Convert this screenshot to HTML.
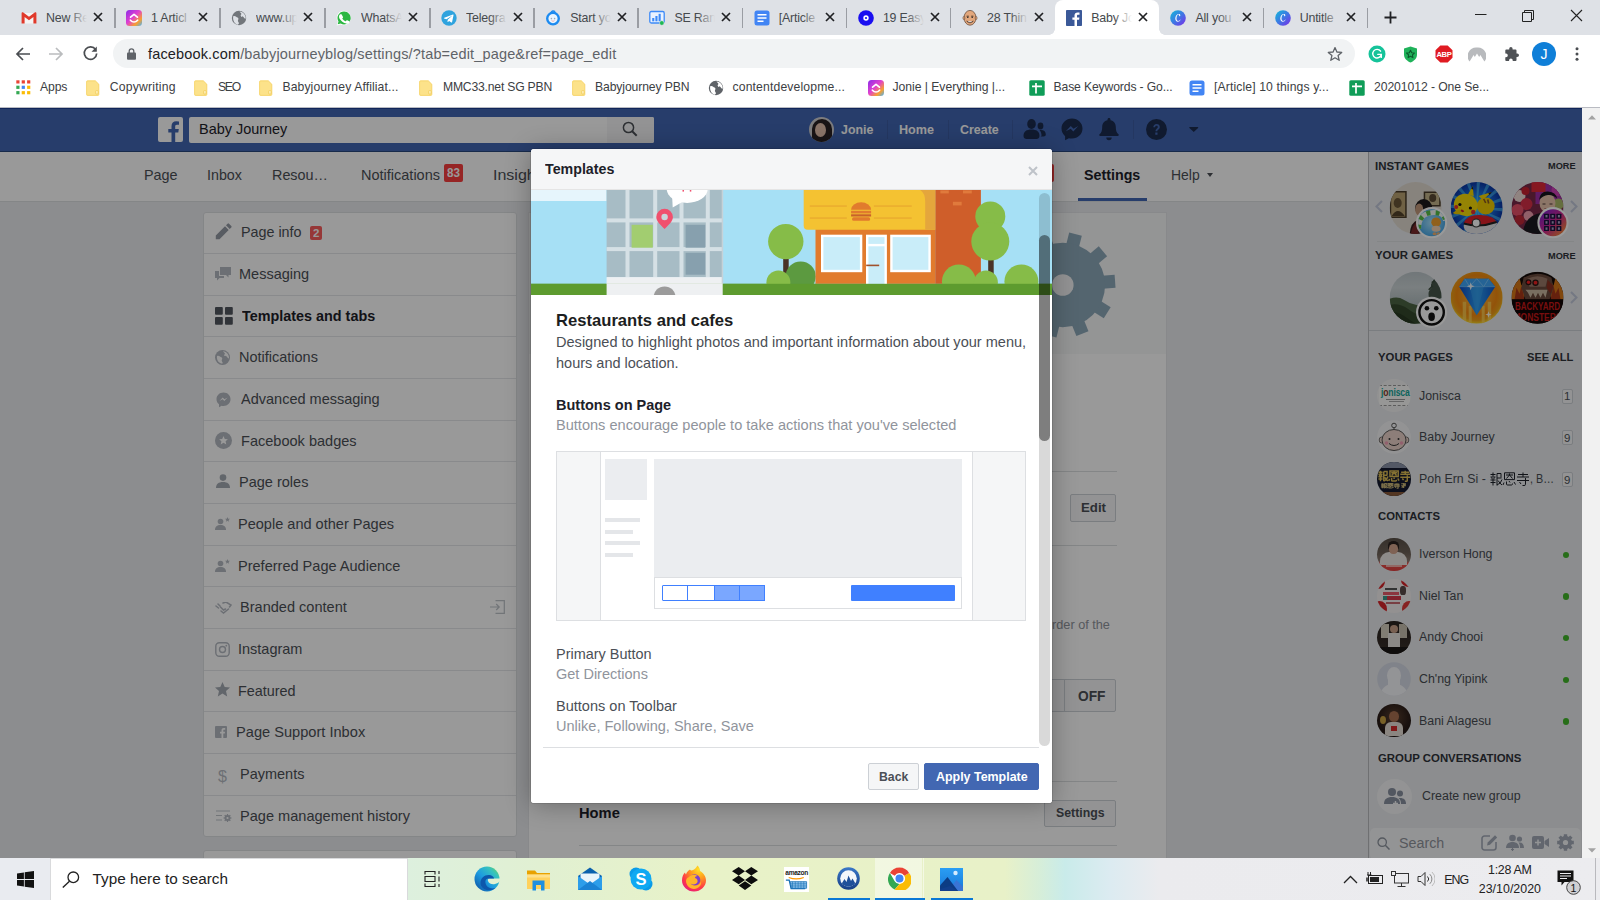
<!DOCTYPE html>
<html>
<head>
<meta charset="utf-8">
<title>Baby Journey</title>
<style>
*{box-sizing:border-box;margin:0;padding:0}
html,body{width:1600px;height:900px;overflow:hidden;background:#fff}
body{position:relative;font-family:"Liberation Sans",sans-serif;color:#1d2129;-webkit-font-smoothing:antialiased}
.abs{position:absolute}
svg{display:block}

/* ---------- Chrome tab strip ---------- */
#tabstrip{position:absolute;left:0;top:0;width:1600px;height:35px;background:#dee1e6}
.tab{position:absolute;top:0;height:35px;width:105px;font-size:12.4px;color:#45494d;letter-spacing:-0.2px}
.tab .fav{position:absolute;left:11.6px;top:9.5px;width:16px;height:16px}
.tab .tt{position:absolute;left:36.6px;top:9.5px;width:41px;height:17px;line-height:17px;overflow:hidden;white-space:nowrap}
.tab .tt:after{content:"";position:absolute;right:0;top:0;width:18px;height:17px;background:linear-gradient(90deg,rgba(222,225,230,0),#dee1e6)}
.tab .x{position:absolute;left:82.3px;top:11.3px;width:12px;height:12px}
.tab .sep{position:absolute;left:104px;top:8px;width:1.5px;height:20px;background:#9a9da3}
.tab.active{background:#fff;border-radius:8px 8px 0 0;top:0;height:35px}
.tab.active:before{content:"";position:absolute;left:-6px;bottom:0;width:6px;height:6px;background:radial-gradient(circle at 0 0,rgba(255,255,255,0) 5.5px,#fff 6px)}
.tab.active:after{content:"";position:absolute;right:-6px;bottom:0;width:6px;height:6px;background:radial-gradient(circle at 100% 0,rgba(255,255,255,0) 5.5px,#fff 6px)}
.tab.active .fav{top:9.5px}.tab.active .tt{top:9.5px}.tab.active .x{top:11.3px}
.tab.active .tt:after{background:linear-gradient(90deg,rgba(255,255,255,0),#fff)}

/* ---------- toolbar ---------- */
#toolbar{position:absolute;left:0;top:35px;width:1600px;height:37px;background:#fff}
#omni{position:absolute;left:113px;top:4px;width:1241.5px;height:29px;border-radius:15px;background:#f1f3f4}
#url{position:absolute;left:35px;top:5.7px;font-size:14.6px;line-height:19px;color:#5f6368;white-space:nowrap;letter-spacing:-0.12px}
#url b{font-weight:400;color:#202124}

/* ---------- bookmarks ---------- */
#bookmarks{position:absolute;left:0;top:72px;width:1600px;height:36px;background:#fff;border-bottom:1px solid #b9bbc2}
.bm{position:absolute;top:8px;height:16px;font-size:12.3px;line-height:16px;color:#3c4043;white-space:nowrap;letter-spacing:-0.15px}
.bm svg{position:absolute;left:0;top:0}
.bm span{position:absolute;left:24px;top:-.6px}

/* ---------- page ---------- */
#page{position:absolute;left:0;top:108px;width:1582px;height:750px;overflow:hidden;background:#e9ebee}
#overlay{position:absolute;left:0;top:0;width:1582px;height:750px;background:rgba(0,0,0,.4)}
#vscroll{position:absolute;left:1582px;top:108px;width:18px;height:750px;background:#f1f1f1}

.t{position:absolute;white-space:nowrap;line-height:20px;height:20px;transform-origin:0 50%;display:block}
/* ---------- taskbar ---------- */
#taskbar{position:absolute;left:0;top:858px;width:1600px;height:42px;background:linear-gradient(90deg,#dcefe0 0,#ddf0de 408px,#e1f0d2 540px,#e8f2c8 700px,#e8f1c8 1005px,#d6eed9 1040px,#c9ebea 1065px,#dcebf1 1110px,#ebebee 1160px,#ececef 1600px)}
</style>
</head>
<body>

<!-- ================= TAB STRIP ================= -->
<div id="tabstrip">
<div class="tab" style="left:9.5px;width:105.0px"><svg class="fav" viewBox="0 0 16 16"><path d="M1.200 3h13.600v10.500H1.200z" fill="#f4f4f4"/><path d="M.6 13.500V3.200c0-.9 1-1.300 1.700-.8L8 6.700l5.700-4.300c.7-.5 1.700-.1 1.700.8v10.300h-3V6.900L8 10.200 3.600 6.900v6.600z" fill="#e0392b"/></svg><span class="tt">New Re</span><svg class="x" viewBox="0 0 12 12"><path d="M2 2 L10 10 M10 2 L2 10" stroke="#202124" stroke-width="1.7" fill="none"/></svg><i class="sep" style="left:104.5px"></i></div>
<div class="tab" style="left:114.5px;width:105.0px"><svg class="fav" viewBox="0 0 16 16"><defs><linearGradient id="cu" x1="0" y1="0" x2="1" y2="1"><stop offset="0" stop-color="#8a2be8"/><stop offset=".45" stop-color="#e040d0"/><stop offset=".75" stop-color="#f8a030"/><stop offset="1" stop-color="#40b0ff"/></linearGradient></defs><rect x="0" y="0" width="16" height="16" rx="3.5" fill="url(#cu)"/><path d="M4.6 7.2 8 4.3l3.4 2.9" stroke="#fff" stroke-width="1.7" fill="none" stroke-linecap="round" stroke-linejoin="round"/><path d="M4.4 10.2c2.2 2.4 5 2.4 7.2 0" stroke="#fff" stroke-width="1.7" fill="none" stroke-linecap="round"/></svg><span class="tt">1 Articl</span><svg class="x" viewBox="0 0 12 12"><path d="M2 2 L10 10 M10 2 L2 10" stroke="#202124" stroke-width="1.7" fill="none"/></svg><i class="sep" style="left:104.5px"></i></div>
<div class="tab" style="left:219.5px;width:105.0px"><svg class="fav" viewBox="0 0 16 16"><circle cx="8" cy="8" r="7.2" fill="#72767b"/><path d="M2.2 6.2c1.2-.6 2.2-.2 3 .6s1.9.6 2.2 1.6-.8 1.6-.4 2.8 1.2 1.4.8 2.6l-1 .9C4 14 1.500 11 2.2 6.2zM8.500 1.600c.3 1 1.400 1 1.800 2s-1 1.300-.6 2.200 2.100.2 2.800 1.200.9 1.500 2.200 1.700c.300-3.400-2.200-6.600-6.200-7.100z" fill="#dee1e6"/></svg><span class="tt">www.up</span><svg class="x" viewBox="0 0 12 12"><path d="M2 2 L10 10 M10 2 L2 10" stroke="#202124" stroke-width="1.7" fill="none"/></svg><i class="sep" style="left:104.5px"></i></div>
<div class="tab" style="left:324.5px;width:105.0px"><svg class="fav" viewBox="0 0 16 16"><path d="M8 .7a7.200 7.200 0 0 0-6.200 10.900L.7 15.400l3.900-1A7.200 7.200 0 1 0 8 .7z" fill="#fff"/><path d="M8 1.500a6.500 6.500 0 0 0-5.500 9.900l-.8 2.900 3-.8A6.500 6.500 0 1 0 8 1.500z" fill="#2cb742"/><path d="M5.700 4.600c-.2-.4-.4-.4-.6-.4h-.5c-.2 0-.5.100-.7.400-.3.300-.9.900-.9 2.100s.9 2.400 1 2.600c.2.200 1.800 2.800 4.400 3.800 2.100.8 2.600.7 3 .6.500 0 1.500-.6 1.700-1.200s.2-1.100.2-1.200l-.5-.3-1.600-.8c-.2-.1-.4-.1-.6.100l-.7.900c-.1.200-.3.200-.5.100a6 6 0 0 1-3-2.600c-.2-.4.200-.4.600-1.200.1-.2 0-.3 0-.4z" fill="#fff"/></svg><span class="tt">WhatsA</span><svg class="x" viewBox="0 0 12 12"><path d="M2 2 L10 10 M10 2 L2 10" stroke="#202124" stroke-width="1.7" fill="none"/></svg><i class="sep" style="left:104.5px"></i></div>
<div class="tab" style="left:429.5px;width:104.2px"><svg class="fav" viewBox="0 0 16 16"><circle cx="8" cy="8" r="7.700" fill="#2fa3de"/><path d="M3.300 7.800l8.600-3.400c.4-.1.800.1.600.8l-1.400 6.900c-.1.500-.4.600-.8.400L8.100 10.900l-1.100 1c-.1.200-.2.200-.5.200l.2-2.300 4.200-3.800c.2-.2 0-.3-.3-.1L5.400 9.200 3.200 8.500c-.5-.2-.5-.5.100-.7z" fill="#fff"/></svg><span class="tt">Telegra</span><svg class="x" viewBox="0 0 12 12"><path d="M2 2 L10 10 M10 2 L2 10" stroke="#202124" stroke-width="1.7" fill="none"/></svg><i class="sep" style="left:103.7px"></i></div>
<div class="tab" style="left:533.7px;width:104.2px"><svg class="fav" viewBox="0 0 16 16"><circle cx="8" cy="8.600" r="5.800" fill="#e8f4ff" stroke="#1d8bf0" stroke-width="2.400"/><path d="M6.200 2.600c.6-1.800 2.400-2 3.300-1.200" stroke="#1d8bf0" stroke-width="1.600" fill="none" stroke-linecap="round"/><circle cx="6.400" cy="8.600" r=".8" fill="#9ab"/><circle cx="9.600" cy="8.600" r=".8" fill="#9ab"/><path d="M6.600 10.600c.9.800 1.900.8 2.800 0" stroke="#e99" stroke-width=".8" fill="none"/></svg><span class="tt">Start yo</span><svg class="x" viewBox="0 0 12 12"><path d="M2 2 L10 10 M10 2 L2 10" stroke="#202124" stroke-width="1.7" fill="none"/></svg><i class="sep" style="left:103.7px"></i></div>
<div class="tab" style="left:637.9px;width:104.2px"><svg class="fav" viewBox="0 0 16 16"><rect x=".8" y="1.500" width="14.400" height="11.500" rx="1.500" fill="#e9f2ff" stroke="#3d8af7" stroke-width="1.300"/><rect x="3.200" y="8" width="2.100" height="3.300" fill="#3d8af7"/><rect x="6.400" y="6" width="2.100" height="5.300" fill="#3d8af7"/><rect x="9.600" y="3.800" width="2.100" height="7.500" fill="#3d8af7"/><circle cx="12.800" cy="13" r="2.300" fill="#1db954" stroke="#dee1e6" stroke-width=".6"/></svg><span class="tt">SE Rank</span><svg class="x" viewBox="0 0 12 12"><path d="M2 2 L10 10 M10 2 L2 10" stroke="#202124" stroke-width="1.7" fill="none"/></svg><i class="sep" style="left:103.7px"></i></div>
<div class="tab" style="left:742.1px;width:104.2px"><svg class="fav" viewBox="0 0 16 16"><rect x=".5" y=".5" width="15" height="15" rx="2.500" fill="#4285f4"/><path d="M3.500 4.800h9M3.500 8h9M3.500 11.200h6" stroke="#fff" stroke-width="1.600"/></svg><span class="tt">[Article</span><svg class="x" viewBox="0 0 12 12"><path d="M2 2 L10 10 M10 2 L2 10" stroke="#202124" stroke-width="1.7" fill="none"/></svg><i class="sep" style="left:103.7px"></i></div>
<div class="tab" style="left:846.3px;width:104.2px"><svg class="fav" viewBox="0 0 16 16"><circle cx="8" cy="8" r="7.800" fill="#1a0ff0"/><circle cx="8" cy="8" r="2.700" fill="#fff"/><circle cx="8" cy="8" r="1.100" fill="#1a0ff0"/></svg><span class="tt">19 Easy</span><svg class="x" viewBox="0 0 12 12"><path d="M2 2 L10 10 M10 2 L2 10" stroke="#202124" stroke-width="1.7" fill="none"/></svg><i class="sep" style="left:103.7px"></i></div>
<div class="tab" style="left:950.5px;width:104.2px"><svg class="fav" viewBox="0 0 16 16"><ellipse cx="8" cy="7.800" rx="6" ry="7.400" fill="#e2a77c" stroke="#5a4030" stroke-width=".7"/><ellipse cx="1.900" cy="8" rx="1" ry="1.600" fill="#e2a77c" stroke="#5a4030" stroke-width=".5"/><ellipse cx="14.100" cy="8" rx="1" ry="1.600" fill="#e2a77c" stroke="#5a4030" stroke-width=".5"/><path d="M4.600 6.200h2.200M9.200 6.200h2.200" stroke="#3a2a20" stroke-width=".9"/><circle cx="5.800" cy="7.400" r=".7" fill="#222"/><circle cx="10.200" cy="7.400" r=".7" fill="#222"/><path d="M4.200 10.500c1.200 3.500 6.400 3.500 7.600 0-1.400 1-6.200 1-7.600 0z" fill="#6b5040"/><path d="M6.300 11.600h3.400" stroke="#fff" stroke-width=".8"/></svg><span class="tt">28 Thin</span><svg class="x" viewBox="0 0 12 12"><path d="M2 2 L10 10 M10 2 L2 10" stroke="#202124" stroke-width="1.7" fill="none"/></svg></div>
<div class="tab active" style="left:1054.7px;width:104.2px"><svg class="fav" viewBox="0 0 16 16"><rect width="16" height="16" rx=".8" fill="#3b5998"/><path d="M11 16V9.800h2.100l.3-2.400H11V5.900c0-.7.200-1.200 1.200-1.200h1.300V2.500a17 17 0 0 0-1.900-.1c-1.900 0-3.100 1.100-3.100 3.200v1.800H6.400v2.400h2.100V16z" fill="#fff"/></svg><span class="tt">Baby Jo</span><svg class="x" viewBox="0 0 12 12"><path d="M2 2 L10 10 M10 2 L2 10" stroke="#202124" stroke-width="1.7" fill="none"/></svg></div>
<div class="tab" style="left:1158.9px;width:104.2px"><svg class="fav" viewBox="0 0 16 16"><defs><linearGradient id="cv11" x1="0" y1="0" x2="1" y2="1"><stop offset="0" stop-color="#10bcd8"/><stop offset=".5" stop-color="#3e78e4"/><stop offset="1" stop-color="#7d2ae8"/></linearGradient></defs><circle cx="8" cy="8" r="7.800" fill="url(#cv11)"/><path d="M10.600 9.800c-.6 1.200-1.600 2-2.800 2-1.500 0-2.500-1.300-2.500-3.200 0-2.700 1.700-4.600 3.500-4.600.9 0 1.500.5 1.500 1.200 0 .6-.4 1-.8 1-.3 0-.5-.2-.4-.6.100-.5 0-1-.5-1-1 0-2.100 1.700-2.100 3.800 0 1.500.6 2.500 1.700 2.500.9 0 1.700-.6 2.200-1.400z" fill="#fff"/></svg><span class="tt">All you</span><svg class="x" viewBox="0 0 12 12"><path d="M2 2 L10 10 M10 2 L2 10" stroke="#202124" stroke-width="1.7" fill="none"/></svg><i class="sep" style="left:103.7px"></i></div>
<div class="tab" style="left:1263.1px;width:104.2px"><svg class="fav" viewBox="0 0 16 16"><defs><linearGradient id="cv12" x1="0" y1="0" x2="1" y2="1"><stop offset="0" stop-color="#10bcd8"/><stop offset=".5" stop-color="#3e78e4"/><stop offset="1" stop-color="#7d2ae8"/></linearGradient></defs><circle cx="8" cy="8" r="7.800" fill="url(#cv12)"/><path d="M10.600 9.800c-.6 1.200-1.600 2-2.800 2-1.500 0-2.500-1.300-2.500-3.200 0-2.700 1.700-4.600 3.500-4.600.9 0 1.500.5 1.500 1.200 0 .6-.4 1-.8 1-.3 0-.5-.2-.4-.6.100-.5 0-1-.5-1-1 0-2.100 1.700-2.100 3.800 0 1.500.6 2.500 1.700 2.500.9 0 1.700-.6 2.200-1.400z" fill="#fff"/></svg><span class="tt">Untitle</span><svg class="x" viewBox="0 0 12 12"><path d="M2 2 L10 10 M10 2 L2 10" stroke="#202124" stroke-width="1.7" fill="none"/></svg><i class="sep" style="left:103.7px"></i></div>
<svg class="abs" style="left:1384px;top:11px" width="13" height="13" viewBox="0 0 13 13"><path d="M6.500 .5v12M.5 6.500h12" stroke="#202124" stroke-width="1.800"/></svg>
<svg class="abs" style="left:1475px;top:9px" width="110" height="13" viewBox="0 0 110 13"><path d="M0 5.500h11.500" stroke="#222" stroke-width="1"/><path d="M47.500 3.500h9v9h-9zM49.500 3.500v-2h9v9h-2" stroke="#222" stroke-width="1" fill="none"/><path d="M96 1l11 11M107 1l-11 11" stroke="#222" stroke-width="1.100"/></svg>
</div>

<!-- ================= TOOLBAR ================= -->
<div id="toolbar">
<svg class="abs" style="left:15px;top:11px" width="16" height="16" viewBox="0 0 16 16"><path d="M15 8H2.500M8 2 2 8l6 6" stroke="#4a4d51" stroke-width="1.700" fill="none"/></svg>
<svg class="abs" style="left:48px;top:11px" width="16" height="16" viewBox="0 0 16 16"><path d="M1 8h12.500M8 2l6 6-6 6" stroke="#babcbe" stroke-width="1.700" fill="none"/></svg>
<svg class="abs" style="left:82px;top:10px" width="17" height="17" viewBox="0 0 17 17"><path d="M13.600 4.600A6.200 6.200 0 1 0 14.700 8.500" stroke="#4a4d51" stroke-width="1.700" fill="none"/><path d="M14.800 1.500v5.300H9.500z" fill="#4a4d51"/></svg>
<div id="omni">
<svg class="abs" style="left:14px;top:9px" width="9" height="12" viewBox="0 0 9 12"><rect x="0" y="4.500" width="9" height="7.300" rx="1" fill="#5f6368"/><path d="M2.200 5V3.200a2.300 2.300 0 0 1 4.600 0V5" stroke="#5f6368" stroke-width="1.300" fill="none"/></svg>
<div id="url" style="font-size:14.5px;letter-spacing:0.158px"><b>facebook.com</b>/babyjourneyblog/settings/?tab=edit_page&amp;ref=page_edit</div>
<svg class="abs" style="left:1214px;top:7px" width="16" height="16" viewBox="0 0 16 16"><path d="M8 1.600l1.900 4.400 4.800.4-3.600 3.200 1.100 4.700L8 11.800l-4.200 2.500 1.100-4.700L1.300 6.400l4.800-.4z" stroke="#5f6368" stroke-width="1.300" fill="none" stroke-linejoin="round"/></svg>
</div>
<svg class="abs" style="left:1368px;top:10px" width="18" height="18" viewBox="0 0 18 18"><circle cx="9" cy="9" r="8.500" fill="#15c39a"/><path d="M12.600 6.200A4.300 4.300 0 1 0 13.300 9.400H9.800M13.300 9.400v3" stroke="#fff" stroke-width="1.400" fill="none" stroke-linecap="round"/></svg>
<svg class="abs" style="left:1403px;top:11px" width="15" height="17" viewBox="0 0 15 17"><path d="M7.500 .5 14 2.500v6c0 4-3 6.500-6.500 8C4 15 1 12.500 1 8.500v-6z" fill="#1fb25a"/><path d="M7.500 4.200l1.200 2.500 2.700.3-2 1.900.5 2.700-2.400-1.300-2.400 1.300.5-2.700-2-1.900 2.700-.3z" stroke="#0b5a2c" stroke-width="1.100" fill="none" stroke-linejoin="round"/></svg>
<svg class="abs" style="left:1435px;top:10px" width="18" height="18" viewBox="0 0 18 18"><path d="M5.300 .5h7.400l4.800 4.800v7.400l-4.800 4.800H5.300L.5 12.700V5.300z" fill="#e01b22"/><text x="9" y="12" font-family="Liberation Sans" font-weight="700" font-size="7.600" fill="#fff" text-anchor="middle" letter-spacing="-.3">ABP</text></svg>
<svg class="abs" style="left:1468px;top:12px" width="18" height="15" viewBox="0 0 18 15"><path d="M1.600 14.500A8.600 8.600 0 0 1 9 .5a8.600 8.600 0 0 1 7.400 14l-4-6.500-1.200 2L9 6.500l-2.200 3.500-1.200-2z" fill="#b8babd"/></svg>
<svg class="abs" style="left:1503px;top:11px" width="16" height="16" viewBox="0 0 16 16"><path d="M6.200 2.800a1.700 1.700 0 0 1 3.400 0V3.600h3a.9.900 0 0 1 .9.900v2.900h.7a1.800 1.800 0 0 1 0 3.600h-.7v3.100a.9.900 0 0 1-.9.900H9.700v-.8a1.800 1.800 0 0 0-3.600 0v.8H3.200a.9.900 0 0 1-.9-.9v-2.900H3a1.800 1.800 0 0 0 0-3.600h-.7V4.500a.9.900 0 0 1 .9-.9h3z" fill="#4f5256"/></svg>
<div class="abs" style="left:1532px;top:7px;width:24px;height:24px;border-radius:12px;background:#0f7fd8;color:#fff;font-size:14px;line-height:24px;text-align:center">J</div>
<svg class="abs" style="left:1575px;top:12px" width="4" height="14" viewBox="0 0 4 14"><circle cx="2" cy="1.700" r="1.500" fill="#4a4d51"/><circle cx="2" cy="7" r="1.500" fill="#4a4d51"/><circle cx="2" cy="12.300" r="1.500" fill="#4a4d51"/></svg>
</div>

<!-- ================= BOOKMARKS ================= -->
<div id="bookmarks">
<div class="bm" style="left:16.0px"><svg width="15" height="15" viewBox="0 0 15 15"><rect x="0.3" y="0.3" width="3.200" height="3.200" fill="#ea4335"/><rect x="5.7" y="0.3" width="3.200" height="3.200" fill="#ea4335"/><rect x="11.1" y="0.3" width="3.200" height="3.200" fill="#ea4335"/><rect x="0.3" y="5.7" width="3.200" height="3.200" fill="#34a853"/><rect x="5.7" y="5.7" width="3.200" height="3.200" fill="#4285f4"/><rect x="11.1" y="5.7" width="3.200" height="3.200" fill="#fbbc05"/><rect x="0.3" y="11.1" width="3.200" height="3.200" fill="#34a853"/><rect x="5.7" y="11.1" width="3.200" height="3.200" fill="#fbbc05"/><rect x="11.1" y="11.1" width="3.200" height="3.200" fill="#fbbc05"/></svg><span style="left:24.0px;letter-spacing:-0.120px;font-size:12.2px">Apps</span></div>
<div class="bm" style="left:86.0px"><svg width="14" height="16" viewBox="0 0 14 16"><path d="M1.500 .8h7.800l3.500 3.400v10.300a.9.900 0 0 1-.9.900H1.500a.9.900 0 0 1-.9-.9V1.700a.9.900 0 0 1 .9-.9z" fill="#fce28a" stroke="#f5cf5a" stroke-width=".8"/><rect x="9.600" y="10.600" width="2.600" height="3.400" rx=".8" fill="#fdeeb5" stroke="#eec54c" stroke-width=".6"/></svg><span style="left:23.7px;letter-spacing:0.212px;font-size:12.2px">Copywriting</span></div>
<div class="bm" style="left:194.4px"><svg width="14" height="16" viewBox="0 0 14 16"><path d="M1.500 .8h7.800l3.500 3.400v10.300a.9.900 0 0 1-.9.900H1.500a.9.900 0 0 1-.9-.9V1.700a.9.900 0 0 1 .9-.9z" fill="#fce28a" stroke="#f5cf5a" stroke-width=".8"/><rect x="9.600" y="10.600" width="2.600" height="3.400" rx=".8" fill="#fdeeb5" stroke="#eec54c" stroke-width=".6"/></svg><span style="left:23.5px;letter-spacing:-1.217px;font-size:12.2px">SEO</span></div>
<div class="bm" style="left:259.4px"><svg width="14" height="16" viewBox="0 0 14 16"><path d="M1.500 .8h7.800l3.500 3.400v10.300a.9.900 0 0 1-.9.900H1.500a.9.900 0 0 1-.9-.9V1.700a.9.900 0 0 1 .9-.9z" fill="#fce28a" stroke="#f5cf5a" stroke-width=".8"/><rect x="9.600" y="10.600" width="2.600" height="3.400" rx=".8" fill="#fdeeb5" stroke="#eec54c" stroke-width=".6"/></svg><span style="left:23.0px;letter-spacing:0.109px;font-size:12.2px">Babyjourney Affiliat...</span></div>
<div class="bm" style="left:419.0px"><svg width="14" height="16" viewBox="0 0 14 16"><path d="M1.500 .8h7.800l3.500 3.400v10.300a.9.900 0 0 1-.9.900H1.500a.9.900 0 0 1-.9-.9V1.700a.9.900 0 0 1 .9-.9z" fill="#fce28a" stroke="#f5cf5a" stroke-width=".8"/><rect x="9.600" y="10.600" width="2.600" height="3.400" rx=".8" fill="#fdeeb5" stroke="#eec54c" stroke-width=".6"/></svg><span style="left:24.0px;letter-spacing:-0.215px;font-size:12.2px">MMC33.net SG PBN</span></div>
<div class="bm" style="left:571.5px"><svg width="14" height="16" viewBox="0 0 14 16"><path d="M1.500 .8h7.800l3.500 3.400v10.300a.9.900 0 0 1-.9.900H1.500a.9.900 0 0 1-.9-.9V1.700a.9.900 0 0 1 .9-.9z" fill="#fce28a" stroke="#f5cf5a" stroke-width=".8"/><rect x="9.600" y="10.600" width="2.600" height="3.400" rx=".8" fill="#fdeeb5" stroke="#eec54c" stroke-width=".6"/></svg><span style="left:23.5px;letter-spacing:-0.114px;font-size:12.2px">Babyjourney PBN</span></div>
<div class="bm" style="left:708.0px"><svg width="16" height="16" viewBox="0 0 16 16"><circle cx="8" cy="8" r="7.200" fill="#5f6368"/><path d="M2.200 6.200c1.200-.6 2.200-.2 3 .6s1.900.6 2.200 1.600-.8 1.600-.4 2.800 1.200 1.400.8 2.600l-1 .9C4 14 1.500 11 2.200 6.200zM8.500 1.600c.3 1 1.400 1 1.800 2s-1 1.300-.6 2.200 2.100.2 2.800 1.200.9 1.500 2.200 1.700c.3-3.400-2.200-6.600-6.200-7.100z" fill="#fff"/></svg><span style="left:24.5px;letter-spacing:0.144px;font-size:12.2px">contentdevelopme...</span></div>
<div class="bm" style="left:867.5px"><svg width="16" height="16" viewBox="0 0 16 16"><defs><linearGradient id="cub" x1="0" y1="0" x2="1" y2="1"><stop offset="0" stop-color="#8a2be8"/><stop offset=".45" stop-color="#e040d0"/><stop offset=".75" stop-color="#f8a030"/><stop offset="1" stop-color="#40b0ff"/></linearGradient></defs><rect width="16" height="16" rx="3.500" fill="url(#cub)"/><path d="M4.600 7.200 8 4.300l3.400 2.900" stroke="#fff" stroke-width="1.700" fill="none" stroke-linecap="round" stroke-linejoin="round"/><path d="M4.400 10.200c2.200 2.400 5 2.400 7.200 0" stroke="#fff" stroke-width="1.700" fill="none" stroke-linecap="round"/></svg><span style="left:25.0px;letter-spacing:-0.038px;font-size:12.2px">Jonie | Everything |...</span></div>
<div class="bm" style="left:1028.5px"><svg width="16" height="16" viewBox="0 0 16 16"><rect x=".3" y=".3" width="15.400" height="15.400" rx="1.500" fill="#0f9d58"/><path d="M3 6.300h10M7 3v10.500" stroke="#fff" stroke-width="1.700"/></svg><span style="left:25.0px;letter-spacing:-0.140px;font-size:12.2px">Base Keywords - Go...</span></div>
<div class="bm" style="left:1188.5px"><svg width="16" height="16" viewBox="0 0 16 16"><rect x=".5" y=".5" width="15" height="15" rx="2.500" fill="#4285f4"/><path d="M3.500 4.800h9M3.500 8h9M3.500 11.200h6" stroke="#fff" stroke-width="1.600"/></svg><span style="left:25.5px;letter-spacing:0.116px;font-size:12.2px">[Article] 10 things y...</span></div>
<div class="bm" style="left:1348.5px"><svg width="16" height="16" viewBox="0 0 16 16"><rect x=".3" y=".3" width="15.400" height="15.400" rx="1.500" fill="#0f9d58"/><path d="M3 6.300h10M7 3v10.500" stroke="#fff" stroke-width="1.700"/></svg><span style="left:25.5px;letter-spacing:-0.077px;font-size:12.2px">20201012 - One Se...</span></div>
</div>

<!-- ================= PAGE ================= -->
<div id="page">
<div class="abs" style="left:0.0px;top:0.0px;width:1583.0px;height:43.6px;background:#4267b2;border-bottom:1px solid #29487d"></div>
<div class="abs" style="left:0.0px;top:0.0px;width:1583.0px;height:1.0px;background:#1c3f94"></div>
<svg class="abs" style="left:158px;top:9px" width="25" height="25" viewBox="0 0 25 25"><rect width="25" height="25" rx="2" fill="#fff"/><path d="M17.200 25v-9.400h3.100l.5-3.700h-3.600V9.600c0-1.100.3-1.800 1.800-1.800h2V4.500a25 25 0 0 0-2.800-.15c-2.800 0-4.700 1.700-4.700 4.800v2.750H10.300v3.700h3.200V25z" fill="#4267b2"/></svg>
<div class="abs" style="left:189.0px;top:8.7px;width:465.0px;height:25.9px;background:#fff;border-radius:2px"></div>
<div class="abs" style="left:606.5px;top:8.7px;width:47.5px;height:25.9px;background:#f5f6f7;border-radius:0 2px 2px 0"></div>
<span class="t" style="left:198.7px;top:10.6px;font-size:14.5px;font-weight:400;color:#1d2129;transform:scaleX(0.9958);">Baby Journey</span>
<svg class="abs" style="left:622px;top:12.500px" width="16" height="16" viewBox="0 0 16 16"><circle cx="6.500" cy="6.500" r="5.100" stroke="#4b4f56" stroke-width="1.500" fill="none"/><path d="M10.200 10.200l4.500 4.500" stroke="#4b4f56" stroke-width="2"/></svg>
<div class="abs" style="left:809px;top:8.500px;width:25px;height:25px;border-radius:50%;background:#cfcfd3;overflow:hidden"><div class="abs" style="left:3px;top:2px;width:20px;height:26px;border-radius:10px 10px 4px 4px;background:#2a2224"></div><div class="abs" style="left:6px;top:6px;width:11px;height:14px;border-radius:50%;background:#e6c2ae"></div></div>
<span class="t" style="left:840.7px;top:12.2px;font-size:12.5px;font-weight:700;color:#fff;transform:scaleX(0.9891);">Jonie</span>
<span class="t" style="left:899.0px;top:12.2px;font-size:12.5px;font-weight:700;color:#fff;transform:scaleX(1.0076);">Home</span>
<span class="t" style="left:960.0px;top:12.2px;font-size:12.5px;font-weight:700;color:#fff;transform:scaleX(0.9943);">Create</span>
<div class="abs" style="left:886.6px;top:12.0px;width:1.0px;height:19.0px;background:rgba(0,0,0,.09)"></div>
<div class="abs" style="left:947.5px;top:12.0px;width:1.0px;height:19.0px;background:rgba(0,0,0,.09)"></div>
<div class="abs" style="left:1012.0px;top:12.0px;width:1.0px;height:19.0px;background:rgba(0,0,0,.09)"></div>
<div class="abs" style="left:1132.8px;top:12.0px;width:1.0px;height:19.0px;background:rgba(0,0,0,.09)"></div>
<svg class="abs" style="left:1023px;top:10px" width="23" height="22" viewBox="0 0 23 22"><ellipse cx="8.500" cy="6" rx="4.300" ry="5" fill="#1b2c4f"/><path d="M.5 18c0-4.500 3-6.500 8-6.500s8 2 8 6.500c0 2-1.500 3-3 3h-10c-1.500 0-3-1-3-3z" fill="#1b2c4f"/><ellipse cx="17.500" cy="8" rx="2.900" ry="3.400" fill="#1b2c4f"/><path d="M17.500 18.500h3c1.500 0 2.300-1 2.300-2.300 0-2.700-2-4.200-4.800-4.200-.5 0-1 0-1.500.2 1.500 1.300 2 3.300 2 5.300 0 .4-.4.700-1 1z" fill="#1b2c4f"/></svg>
<svg class="abs" style="left:1061px;top:10px" width="22" height="23" viewBox="0 0 22 23"><path d="M11 .5C5 .5 .5 4.900 .5 10.600c0 3.100 1.400 5.800 3.600 7.600v4.100l3.800-2.100c1 .3 2 .4 3.100.4 6 0 10.500-4.400 10.500-10C21.500 4.900 17 .5 11 .5z" fill="#1b2c4f"/><path d="M4.800 13.300l5-5.300 2.700 2.700 4.800-2.700-5 5.400-2.600-2.700z" fill="#4267b2"/></svg>
<svg class="abs" style="left:1099px;top:10px" width="20" height="23" viewBox="0 0 20 23"><path d="M10 0c.9 0 1.500.6 1.500 1.500v.7c3.300.7 5.300 3.300 5.300 6.800 0 3.500.6 5.500 2.700 7.300.5.500.3 1.700-.7 1.700H1.200c-1 0-1.200-1.200-.7-1.700 2.100-1.800 2.700-3.800 2.700-7.300 0-3.500 2-6.100 5.300-6.800v-.7C8.500.6 9.100 0 10 0z" fill="#1b2c4f"/><path d="M7.300 19.500h5.400a2.700 2.700 0 0 1-5.400 0z" fill="#1b2c4f"/></svg>
<svg class="abs" style="left:1146px;top:10.500px" width="21" height="21" viewBox="0 0 21 21"><circle cx="10.500" cy="10.500" r="10.500" fill="#1b2c4f"/><path d="M7.300 8.300c0-2 1.400-3.300 3.300-3.300s3.200 1.200 3.200 2.900c0 2.600-2.500 2.400-2.500 4.300H9.500c0-2.700 2.300-2.700 2.300-4.300 0-.7-.5-1.200-1.300-1.200-.9 0-1.400.6-1.400 1.600zM9.300 13.600h2.200v2.100H9.300z" fill="#4267b2"/></svg>
<svg class="abs" style="left:1189.300px;top:18.700px" width="9.500" height="5" viewBox="0 0 11 6"><path d="M.8 0h9.400a.7.700 0 0 1 .5 1.200L5.500 6 .3 1.200A.7.700 0 0 1 .8 0z" fill="#1b2c4f"/></svg>
<div class="abs" style="left:0.0px;top:44.0px;width:1369.0px;height:49.7px;background:#fff;border-bottom:1px solid #dddfe2"></div>
<span class="t" style="left:144.2px;top:57.0px;font-size:14.6px;font-weight:400;color:#4b4f56;transform:scaleX(0.9855);">Page</span>
<span class="t" style="left:207.4px;top:57.0px;font-size:14.6px;font-weight:400;color:#4b4f56;transform:scaleX(0.9775);">Inbox</span>
<span class="t" style="left:272.4px;top:57.0px;font-size:14.6px;font-weight:400;color:#4b4f56;transform:scaleX(0.9845);">Resou…</span>
<span class="t" style="left:360.6px;top:57.0px;font-size:14.6px;font-weight:400;color:#4b4f56;transform:scaleX(0.9937);">Notifications</span>
<div class="abs" style="left:444.4px;top:56.0px;width:18.8px;height:18.0px;background:#fa3e3e;border-radius:2px"></div>
<span class="t" style="left:447.3px;top:55.2px;font-size:12px;font-weight:700;color:#fff;transform:scaleX(0.9731);">83</span>
<span class="t" style="left:492.8px;top:57.0px;font-size:14.6px;font-weight:400;color:#4b4f56;transform:scaleX(1.0975);">Insights</span>
<div class="abs" style="left:1040.0px;top:56.4px;width:14.0px;height:17.6px;background:#fa3e3e;border-radius:2px"></div>
<span class="t" style="left:1084.0px;top:57.0px;font-size:14.6px;font-weight:700;color:#1d2129;transform:scaleX(0.9778);">Settings</span>
<div class="abs" style="left:1077.8px;top:90.0px;width:69.5px;height:3.0px;background:#4267b2"></div>
<span class="t" style="left:1170.7px;top:57.0px;font-size:14.6px;font-weight:400;color:#4b4f56;transform:scaleX(0.9562);">Help</span>
<svg class="abs" style="left:1207px;top:64.500px" width="6" height="4" viewBox="0 0 6 4"><path d="M0 0h6L3 4z" fill="#4b4f56"/></svg>
<div class="abs" style="left:203.0px;top:104.3px;width:314.0px;height:624.9px;background:#fff;border:1px solid #dddfe2;border-radius:3px"></div>
<div class="abs" style="left:203.0px;top:742.0px;width:314.0px;height:50.0px;background:#fff;border:1px solid #dddfe2;border-radius:3px"></div>
<div class="abs" style="left:204.0px;top:144.9px;width:312.0px;height:1.0px;background:#e5e6e9"></div>
<div class="abs" style="left:215px;top:115.4px"><svg width="17" height="17" viewBox="0 0 17 17"><path d="M.8 16.200V12.500L10 3.300l3.700 3.700-9.200 9.200zM11 2.300l1.600-1.600a1 1 0 0 1 1.400 0l2.300 2.300a1 1 0 0 1 0 1.400L14.700 6z" fill="#9399a3"/></svg></div>
<span class="t" style="left:240.7px;top:114.4px;font-size:14.6px;font-weight:400;color:#4b4f56;transform:scaleX(0.9810);">Page info</span>
<div class="abs" style="left:204.0px;top:186.6px;width:312.0px;height:1.0px;background:#e5e6e9"></div>
<div class="abs" style="left:215px;top:159.1px"><svg width="16" height="14" viewBox="0 0 16 14"><path d="M5 0h11v8h-2.500v2.500L11 8H5z" fill="#b4b9c1"/><path d="M0 4h4v5h5v2H4.500L2 13.500V11H0z" fill="#b4b9c1"/></svg></div>
<span class="t" style="left:238.5px;top:156.1px;font-size:14.6px;font-weight:400;color:#4b4f56;transform:scaleX(0.9932);">Messaging</span>
<div class="abs" style="left:204.0px;top:228.2px;width:312.0px;height:1.0px;background:#e5e6e9"></div>
<div class="abs" style="left:215px;top:198.7px"><svg width="18" height="18" viewBox="0 0 18 18"><rect x="0" y="0" width="7.800" height="7.800" rx="1" fill="#53575f"/><rect x="10" y="0" width="7.800" height="7.800" rx="1" fill="#53575f"/><rect x="0" y="10" width="7.800" height="7.800" rx="1" fill="#53575f"/><rect x="10" y="10" width="7.800" height="7.800" rx="1" fill="#53575f"/></svg></div>
<span class="t" style="left:241.8px;top:197.7px;font-size:14.6px;font-weight:700;color:#1d2129;transform:scaleX(0.9854);">Templates and tabs</span>
<div class="abs" style="left:204.0px;top:269.9px;width:312.0px;height:1.0px;background:#e5e6e9"></div>
<div class="abs" style="left:215px;top:241.9px"><svg width="15" height="15" viewBox="0 0 15 15"><circle cx="7.500" cy="7.500" r="7.500" fill="#b4b9c1"/><path d="M2 6c1.200-.6 2.200-.2 3 .6s1.900.6 2.200 1.600-.8 1.600-.4 2.800 1.200 1.400.8 2.600C4 13.500 1.300 10.500 2 6zM8 1.300c.3 1 1.400 1 1.800 2s-1 1.300-.6 2.200 2.100.2 2.800 1.200.9 1.500 2 1.700c.3-3.400-2-6.600-6-7.100z" fill="#fff"/></svg></div>
<span class="t" style="left:238.5px;top:239.4px;font-size:14.6px;font-weight:400;color:#4b4f56;transform:scaleX(0.9925);">Notifications</span>
<div class="abs" style="left:204.0px;top:311.5px;width:312.0px;height:1.0px;background:#e5e6e9"></div>
<div class="abs" style="left:216px;top:283.5px"><svg width="15" height="16" viewBox="0 0 15 16"><path d="M7.500 .5C3.500 .5 .5 3.400 .5 7.200c0 2.100 1 3.900 2.500 5.100v2.900l2.600-1.500c.6.200 1.200.2 1.900.2 4 0 7-2.900 7-6.700S11.500.5 7.500.5z" fill="#b4b9c1"/><path d="M3.400 9l3.300-3.500 1.800 1.800 3.100-1.800L8.300 9 6.600 7.200z" fill="#fff"/></svg></div>
<span class="t" style="left:240.7px;top:281.0px;font-size:14.6px;font-weight:400;color:#4b4f56;transform:scaleX(0.9939);">Advanced messaging</span>
<div class="abs" style="left:204.0px;top:353.2px;width:312.0px;height:1.0px;background:#e5e6e9"></div>
<div class="abs" style="left:215px;top:324.2px"><svg width="17" height="17" viewBox="0 0 17 17"><circle cx="8.500" cy="8.500" r="8.500" fill="#b4b9c1"/><path d="M8.500 4l1.300 2.900 3.100.3-2.300 2.100.7 3.100-2.800-1.600-2.800 1.600.7-3.100L4.100 7.200l3.100-.3z" fill="#fff"/></svg></div>
<span class="t" style="left:240.7px;top:322.7px;font-size:14.6px;font-weight:400;color:#4b4f56;transform:scaleX(0.9963);">Facebook badges</span>
<div class="abs" style="left:204.0px;top:394.9px;width:312.0px;height:1.0px;background:#e5e6e9"></div>
<div class="abs" style="left:215.5px;top:366.4px"><svg width="14" height="14" viewBox="0 0 14 14"><circle cx="7" cy="3.600" r="3.300" fill="#a4aab3"/><path d="M0 14c0-4 2.500-6 7-6s7 2 7 6z" fill="#a4aab3"/></svg></div>
<span class="t" style="left:238.5px;top:364.4px;font-size:14.6px;font-weight:400;color:#4b4f56;transform:scaleX(0.9945);">Page roles</span>
<div class="abs" style="left:204.0px;top:436.5px;width:312.0px;height:1.0px;background:#e5e6e9"></div>
<div class="abs" style="left:215px;top:409.0px"><svg width="15" height="13" viewBox="0 0 15 13"><circle cx="5.500" cy="4.500" r="2.800" fill="#b4b9c1"/><path d="M0 13c0-3.500 2-5 5.500-5s5.500 1.500 5.500 5z" fill="#b4b9c1"/><path d="M12.500 0l.7 1.700 1.800.1-1.400 1.200.5 1.800-1.600-1-1.600 1 .5-1.800L10 1.800l1.800-.1z" fill="#b4b9c1"/></svg></div>
<span class="t" style="left:238.4px;top:406.0px;font-size:14.6px;font-weight:400;color:#4b4f56;transform:scaleX(0.9961);">People and other Pages</span>
<div class="abs" style="left:204.0px;top:478.2px;width:312.0px;height:1.0px;background:#e5e6e9"></div>
<div class="abs" style="left:215px;top:450.7px"><svg width="15" height="13" viewBox="0 0 15 13"><circle cx="5.500" cy="4.500" r="2.800" fill="#b4b9c1"/><path d="M0 13c0-3.500 2-5 5.500-5s5.500 1.500 5.500 5z" fill="#b4b9c1"/><path d="M12.500 0l.7 1.700 1.800.1-1.400 1.200.5 1.800-1.600-1-1.600 1 .5-1.800L10 1.800l1.800-.1z" fill="#b4b9c1"/></svg></div>
<span class="t" style="left:238.4px;top:447.7px;font-size:14.6px;font-weight:400;color:#4b4f56;transform:scaleX(0.9958);">Preferred Page Audience</span>
<div class="abs" style="left:204.0px;top:519.8px;width:312.0px;height:1.0px;background:#e5e6e9"></div>
<div class="abs" style="left:215px;top:494.3px"><svg width="17" height="12" viewBox="0 0 17 12"><path d="M1 4l2.500 2M3 2l2 2M8 1l3-1 5 3-1.500 2M5.500 5l3 3 2-1M6 9l2.500 2 5-4" stroke="#b4b9c1" stroke-width="1.500" fill="none" stroke-linecap="round"/></svg></div>
<span class="t" style="left:240.4px;top:489.3px;font-size:14.6px;font-weight:400;color:#4b4f56;transform:scaleX(0.9971);">Branded content</span>
<div class="abs" style="left:204.0px;top:561.5px;width:312.0px;height:1.0px;background:#e5e6e9"></div>
<div class="abs" style="left:215px;top:533.5px"><svg width="15" height="15" viewBox="0 0 15 15"><rect x=".8" y=".8" width="13.400" height="13.400" rx="3.500" stroke="#b4b9c1" stroke-width="1.400" fill="none"/><circle cx="7.500" cy="7.500" r="3" stroke="#b4b9c1" stroke-width="1.400" fill="none"/><circle cx="11.300" cy="3.700" r=".9" fill="#b4b9c1"/></svg></div>
<span class="t" style="left:238.4px;top:531.0px;font-size:14.6px;font-weight:400;color:#4b4f56;transform:scaleX(0.9924);">Instagram</span>
<div class="abs" style="left:204.0px;top:603.2px;width:312.0px;height:1.0px;background:#e5e6e9"></div>
<div class="abs" style="left:215px;top:574.2px"><svg width="15" height="15" viewBox="0 0 15 15"><path d="M7.500 0l2.200 5 5.300.5-4 3.600 1.200 5.400-4.700-2.900-4.700 2.900L4 9.100 0 5.500 5.300 5z" fill="#a4aab3"/></svg></div>
<span class="t" style="left:238.4px;top:572.7px;font-size:14.6px;font-weight:400;color:#4b4f56;transform:scaleX(0.9859);">Featured</span>
<div class="abs" style="left:204.0px;top:644.8px;width:312.0px;height:1.0px;background:#e5e6e9"></div>
<div class="abs" style="left:215px;top:618.3px"><svg width="12" height="12" viewBox="0 0 12 12"><rect width="12" height="12" rx="1" fill="#b4b9c1"/><path d="M8.300 12V7.500h1.500L10 5.700H8.300V4.600c0-.5.100-.9.900-.9h1V2.100a11 11 0 0 0-1.400-.1c-1.400 0-2.300.8-2.300 2.400v1.300H5v1.800h1.500V12z" fill="#fff"/></svg></div>
<span class="t" style="left:236.0px;top:614.3px;font-size:14.6px;font-weight:400;color:#4b4f56;transform:scaleX(1.0014);">Page Support Inbox</span>
<div class="abs" style="left:204.0px;top:686.5px;width:312.0px;height:1.0px;background:#e5e6e9"></div>
<div class="abs" style="left:218px;top:660.5px"><span style="font-size:16px;color:#b4b9c1;line-height:16px;display:block">$</span></div>
<span class="t" style="left:240.4px;top:656.0px;font-size:14.6px;font-weight:400;color:#4b4f56;transform:scaleX(0.9924);">Payments</span>
<div class="abs" style="left:216px;top:701.6px"><svg width="17" height="12" viewBox="0 0 17 12"><path d="M0 1h14M0 5.500h6M0 10h6" stroke="#bec3c9" stroke-width="1.200"/><circle cx="11.500" cy="8" r="3" fill="#b4b9c1"/><path d="M11.500 4v8M7.500 8h8M8.700 5.200l5.600 5.600M14.300 5.200l-5.600 5.600" stroke="#b4b9c1" stroke-width="1.200"/><circle cx="11.500" cy="8" r="1.100" fill="#fff"/></svg></div>
<span class="t" style="left:240.4px;top:697.6px;font-size:14.6px;font-weight:400;color:#4b4f56;transform:scaleX(0.9979);">Page management history</span>
<div class="abs" style="left:309.7px;top:118.0px;width:12.8px;height:13.5px;background:#fb5c5c;border-radius:2px"></div>
<span class="t" style="left:313.0px;top:114.8px;font-size:11.5px;font-weight:700;color:#fff;transform:scaleX(0.9990);">2</span>
<svg class="abs" style="left:490px;top:492.0px" width="15" height="14" viewBox="0 0 15 14"><path d="M5.500 .7h8.800v12.600H5.500M0 7h9M6.200 4l3 3-3 3" stroke="#bec3c9" stroke-width="1.200" fill="none"/></svg>
<div class="abs" style="left:528.4px;top:104.3px;width:638.9px;height:687.7px;background:#fff;border:1px solid #e3e5e8"></div>
<div class="abs" style="left:529.4px;top:105.3px;width:636.9px;height:140.7px;background:#f7f8f9"></div>
<svg class="abs" style="left:0;top:0" width="1583" height="750" viewBox="0 0 1583 750"><rect x="1056.3" y="124.6" width="13" height="16" fill="#8ca8b9" transform="rotate(86 1062.8 177.0)"/><rect x="1056.3" y="124.6" width="13" height="16" fill="#8ca8b9" transform="rotate(122 1062.8 177.0)"/><rect x="1056.3" y="124.6" width="13" height="16" fill="#8ca8b9" transform="rotate(158 1062.8 177.0)"/><rect x="1056.3" y="124.6" width="13" height="16" fill="#8ca8b9" transform="rotate(194 1062.8 177.0)"/><rect x="1056.3" y="124.6" width="13" height="16" fill="#8ca8b9" transform="rotate(230 1062.8 177.0)"/><rect x="1056.3" y="124.6" width="13" height="16" fill="#8ca8b9" transform="rotate(266 1062.8 177.0)"/><rect x="1056.3" y="124.6" width="13" height="16" fill="#8ca8b9" transform="rotate(302 1062.8 177.0)"/><rect x="1056.3" y="124.6" width="13" height="16" fill="#8ca8b9" transform="rotate(338 1062.8 177.0)"/><rect x="1056.3" y="124.6" width="13" height="16" fill="#8ca8b9" transform="rotate(374 1062.8 177.0)"/><rect x="1056.3" y="124.6" width="13" height="16" fill="#8ca8b9" transform="rotate(410 1062.8 177.0)"/><circle cx="1062.8" cy="177.0" r="42.300" fill="#8ca8b9"/><circle cx="1062.8" cy="177.0" r="10.800" fill="#f5f6f7"/></svg>
<div class="abs" style="left:578.7px;top:363.0px;width:538.0px;height:1.0px;background:#dddfe2"></div>
<div class="abs" style="left:578.7px;top:437.3px;width:538.0px;height:1.0px;background:#dddfe2"></div>
<div class="abs" style="left:578.7px;top:673.0px;width:538.0px;height:1.0px;background:#dddfe2"></div>
<div class="abs" style="left:578.7px;top:737.3px;width:538.0px;height:1.0px;background:#dddfe2"></div>
<div class="abs" style="left:1070.2px;top:386.2px;width:46.0px;height:28.0px;background:#f5f6f7;border:1px solid #ccd0d5;border-radius:2px"></div>
<span class="t" style="left:1080.5px;top:390.2px;font-size:12.5px;font-weight:700;color:#4b4f56;transform:scaleX(1.0589);">Edit</span>
<span class="t" style="left:1045.4px;top:507.3px;font-size:13px;font-weight:400;color:#90949c;transform:scaleX(0.9759);">order of the</span>
<div class="abs" style="left:1010.0px;top:571.0px;width:106.4px;height:33.0px;background:#f5f6f7;border:1px solid #ccd0d5;border-radius:2px"></div>
<div class="abs" style="left:1064.4px;top:572.0px;width:1.0px;height:31.0px;background:#ccd0d5"></div>
<span class="t" style="left:1077.8px;top:577.5px;font-size:14px;font-weight:700;color:#4b4f56;transform:scaleX(0.9821);">OFF</span>
<span class="t" style="left:578.7px;top:695.4px;font-size:14.6px;font-weight:700;color:#1d2129;transform:scaleX(1.0062);">Home</span>
<div class="abs" style="left:1044.4px;top:691.6px;width:72.0px;height:27.8px;background:#f5f6f7;border:1px solid #ccd0d5;border-radius:2px"></div>
<span class="t" style="left:1056.0px;top:695.4px;font-size:12.5px;font-weight:700;color:#4b4f56;transform:scaleX(0.9835);">Settings</span>
<div class="abs" style="left:1368.2px;top:44.0px;width:214.8px;height:706.0px;background:#e9ebee;border-left:1px solid #b9bbbf"></div>
<span class="t" style="left:1375.2px;top:47.6px;font-size:11.4px;font-weight:700;color:#30333a;transform:scaleX(1.0037);">INSTANT GAMES</span>
<span class="t" style="left:1548.2px;top:48.0px;font-size:9.4px;font-weight:700;color:#30333a;transform:scaleX(0.9813);">MORE</span>
<span class="t" style="left:1375.2px;top:137.2px;font-size:11.4px;font-weight:700;color:#30333a;transform:scaleX(1.0033);">YOUR GAMES</span>
<span class="t" style="left:1548.2px;top:137.6px;font-size:9.4px;font-weight:700;color:#30333a;transform:scaleX(0.9813);">MORE</span>
<div class="abs" style="left:1377.0px;top:133.0px;width:197.0px;height:1.0px;background:#dddfe2"></div>
<div class="abs" style="left:1369.3px;top:221.5px;width:213.7px;height:1.0px;background:#ccd0d5"></div>
<svg class="abs" style="left:1374.500px;top:92.3px" width="8" height="13" viewBox="0 0 8 13"><path d="M7 1 1.500 6.500 7 12" stroke="#c2c8da" stroke-width="2" fill="none"/></svg>
<svg class="abs" style="left:1570px;top:92.3px" width="8" height="13" viewBox="0 0 8 13"><path d="M1 1l5.500 5.500L1 12" stroke="#c2c8da" stroke-width="2" fill="none"/></svg>
<svg class="abs" style="left:1570px;top:182.8px" width="8" height="13" viewBox="0 0 8 13"><path d="M1 1l5.500 5.500L1 12" stroke="#c2c8da" stroke-width="2" fill="none"/></svg>
<svg class="abs" style="left:0;top:0" width="1583" height="750" viewBox="0 0 1583 750"><defs><clipPath id="tc"><circle cx="26" cy="26" r="26"/></clipPath><radialGradient id="pk" cx=".5" cy=".5" r=".55"><stop offset="0" stop-color="#40c8ff"/><stop offset=".55" stop-color="#1668d8"/><stop offset="1" stop-color="#082a98"/></radialGradient><radialGradient id="bj" cx=".5" cy=".45" r=".55"><stop offset="0" stop-color="#ffc040"/><stop offset=".7" stop-color="#f48a10"/><stop offset=".88" stop-color="#f0a018"/><stop offset="1" stop-color="#f8d828"/></radialGradient><linearGradient id="dm" x1="0" y1="0" x2="1" y2="0"><stop offset="0" stop-color="#0c4cc8"/><stop offset=".5" stop-color="#2c9cf0"/><stop offset="1" stop-color="#0c58d0"/></linearGradient><linearGradient id="ls" x1="0" y1="0" x2="0" y2="1"><stop offset="0" stop-color="#bcc6ca"/><stop offset=".3" stop-color="#ccd4d6"/><stop offset=".6" stop-color="#b4c0c2"/><stop offset="1" stop-color="#90a098"/></linearGradient><linearGradient id="wq" x1="0" y1="0" x2="1" y2="1"><stop offset="0" stop-color="#7020e0"/><stop offset=".5" stop-color="#d02890"/><stop offset="1" stop-color="#ffa020"/></linearGradient><radialGradient id="aq"><stop offset="0" stop-color="#a8e4ff"/><stop offset="1" stop-color="#48a8e8"/></radialGradient></defs><svg x="1389.7" y="74.0" width="52" height="52" viewBox="0 0 52 52"><g clip-path="url(#tc)"><rect width="52" height="52" fill="#e2dbd0"/><rect x="0" y="9" width="17" height="27" fill="#4a3c2a"/><rect x="1.500" y="10.500" width="14" height="24" fill="#b9a272"/><ellipse cx="8" cy="21" rx="4" ry="5" fill="#6a5638"/><path d="M2 34q6-10 13 0z" fill="#54442c"/><rect x="34" y="9.500" width="17" height="15" fill="#4a3c2a"/><rect x="35.500" y="11" width="14" height="12" fill="#c4b48a"/><ellipse cx="43" cy="16" rx="3.500" ry="4" fill="#5a4a34"/><ellipse cx="34" cy="26" rx="8.500" ry="9" fill="#1d1a1c"/><ellipse cx="29.500" cy="27.500" rx="4" ry="6" fill="#c39a7c"/><path d="M20 52q1-12 8-14l10-1v15z" fill="#3a1e20"/><path d="M21 52q2-9 6-12l2 12z" fill="#7a2a2c"/></g></svg><svg x="1450.7" y="74.0" width="52" height="52" viewBox="0 0 52 52"><g clip-path="url(#tc)"><rect width="52" height="52" fill="url(#pk)"/><path d="M26 26L66.0 26.0L65.7 31.2Z" fill="#58d8ff" opacity=".5"/><path d="M26 26L63.0 41.3L60.7 46.0Z" fill="#58d8ff" opacity=".5"/><path d="M26 26L54.3 54.3L50.4 57.7Z" fill="#58d8ff" opacity=".5"/><path d="M26 26L41.3 63.0L36.4 64.6Z" fill="#58d8ff" opacity=".5"/><path d="M26 26L26.0 66.0L20.8 65.7Z" fill="#58d8ff" opacity=".5"/><path d="M26 26L10.7 63.0L6.0 60.7Z" fill="#58d8ff" opacity=".5"/><path d="M26 26L-2.3 54.3L-5.7 50.4Z" fill="#58d8ff" opacity=".5"/><path d="M26 26L-11.0 41.3L-12.6 36.4Z" fill="#58d8ff" opacity=".5"/><path d="M26 26L-14.0 26.0L-13.7 20.8Z" fill="#58d8ff" opacity=".5"/><path d="M26 26L-11.0 10.7L-8.7 6.0Z" fill="#58d8ff" opacity=".5"/><path d="M26 26L-2.3 -2.3L1.6 -5.7Z" fill="#58d8ff" opacity=".5"/><path d="M26 26L10.7 -11.0L15.6 -12.6Z" fill="#58d8ff" opacity=".5"/><path d="M26 26L26.0 -14.0L31.2 -13.7Z" fill="#58d8ff" opacity=".5"/><path d="M26 26L41.3 -11.0L46.0 -8.7Z" fill="#58d8ff" opacity=".5"/><path d="M26 26L54.3 -2.3L57.7 1.6Z" fill="#58d8ff" opacity=".5"/><path d="M26 26L63.0 10.7L64.6 15.6Z" fill="#58d8ff" opacity=".5"/><ellipse cx="30" cy="44" rx="17" ry="10" fill="#e4e4e6"/><path d="M13 41q4-9 17-8t16 7q-8 3-17 3t-16-2z" fill="#e02028"/><path d="M13 41.500q16 4.500 33-1.500" stroke="#222" stroke-width="2" fill="none"/><circle cx="25.500" cy="41" r="4" fill="#fff" stroke="#333" stroke-width="1.200"/><path d="M17 13l5-9 1 10zM28 14l13-4-9 8z" fill="#f6d800"/><path d="M22 4l-1.500 3 2 .500zM41 10l-3.500 1 1.500 2z" fill="#222"/><ellipse cx="35" cy="24" rx="9" ry="8.500" fill="#f0cc00"/><path d="M33 17l2 4M37 17.500l1 4" stroke="#8a5a20" stroke-width="1.600"/><ellipse cx="15" cy="23" rx="12" ry="11" fill="#f8dc08" transform="rotate(20 15 23)"/><path d="M2 31q4-4 9-3l-2 4q-4 1-7-1z" fill="#f0cc00"/><circle cx="9.200" cy="22.500" r="1.600" fill="#111"/><circle cx="19.700" cy="26" r="1.600" fill="#111"/><circle cx="5.500" cy="25" r="2" fill="#e83030"/><circle cx="22.500" cy="30" r="2.200" fill="#e83030"/><path d="M10.500 27.500q2.500 0 3 2-2 1.500-3.500-.5z" fill="#d02028"/></g></svg><svg x="1511.5" y="74.0" width="52" height="52" viewBox="0 0 52 52"><g clip-path="url(#tc)"><rect width="52" height="52" fill="#7a2848"/><rect x="24" y="0" width="28" height="22" fill="#a030a8"/><rect x="20" y="0" width="14" height="10" fill="#e02838"/><circle cx="8" cy="14" r="6" fill="#f0dcd8"/><circle cx="15" cy="22" r="6" fill="#d83048"/><circle cx="6" cy="28" r="6" fill="#e8506a"/><circle cx="14" cy="9" r="4" fill="#c82030"/><circle cx="17" cy="34" r="5" fill="#f0a0b0"/><circle cx="8" cy="38" r="5" fill="#c02838"/><circle cx="47" cy="22" r="5.500" fill="#a8b868"/><circle cx="46" cy="8" r="6" fill="#d040b8"/><ellipse cx="36" cy="21" rx="8" ry="9.500" fill="#e8c4ac"/><path d="M27.500 18q1-9 9-8.500t9 7q-4-4-9-3.500t-9 5z" fill="#16141a"/><path d="M31 22h3M38 22h3" stroke="#3a2a28" stroke-width=".9"/><path d="M33 26.500q3 1.500 6 0" stroke="#a05048" stroke-width=".9" fill="none"/><path d="M11 52q2-16 14-20l8-2 12 3q5 4 5 19z" fill="#1c1a20"/><path d="M30 31l5 6 4-6z" fill="#e8c4ac"/></g></svg><svg x="1389.7" y="163.7" width="52" height="52" viewBox="0 0 52 52"><g clip-path="url(#tc)"><rect width="52" height="52" fill="url(#ls)"/><path d="M39 25q-1-6 3-9-2-3 1-6 1-4 5-4l4 2v18q-6 4-13-1z" fill="#46564a"/><path d="M43 14l-4 4M45 9l-3 2" stroke="#3a4a3c" stroke-width="1.500"/><path d="M0 27q8-3 14 1t12 5 14 6l12 4v9H0z" fill="#4c6444"/><path d="M0 33q10-2 18 4t20 10v5H0z" fill="#34482c"/><path d="M0 40q8 0 14 4t12 8H0z" fill="#283a22"/></g></svg><svg x="1450.7" y="163.7" width="52" height="52" viewBox="0 0 52 52"><g clip-path="url(#tc)"><rect width="52" height="52" fill="url(#bj)"/><path d="M12 30h3.500v22H12zM18 34h3v18h-3zM31 34h3v18h-3zM37 30h3.500v22H37z" fill="#ffd458" opacity=".75"/><path d="M14 7h24l6.500 8L26 43.500 8.500 15z" fill="url(#dm)"/><path d="M14 7h24l6.500 8h-36z" fill="#3ea6f8"/><path d="M14 7l5 8 7-8 7 8 5-8" stroke="#8cd0ff" stroke-width=".7" fill="none"/><path d="M19 15l7 28.500 7-28.500" fill="#38a4f0" opacity=".55"/><path d="M8.500 15h36" stroke="#78c4ff" stroke-width=".7"/><path d="M19 13.500l1-3 1 3 3 1-3 1-1 3-1-3-3-1zM37 42l.800-2.400.800 2.400 2.400.800-2.400.800-.800 2.400-.800-2.400-2.400-.800z" fill="#fff" opacity=".9"/></g></svg><svg x="1511.5" y="163.7" width="52" height="52" viewBox="0 0 52 52"><g clip-path="url(#tc)"><rect width="52" height="52" fill="#140a08"/><path d="M0 28V8q4-6 8-2l2 8 3-6 2 10-3 10zM52 28V8q-4-6-8-2l-2 8-3-6-2 10 3 10z" fill="#d87818"/><path d="M3 28l2-12 3 6 2-8 3 14zM49 28l-2-12-3 6-2-8-3 14z" fill="#a83818"/><path d="M12 6q14-8 28 0l2 10-4 12H14l-4-12z" fill="#6a4a3c"/><path d="M16 7q10-5 20 0l-2 8H18z" fill="#9a7868"/><circle cx="17" cy="10.500" r="3" fill="#2a1412"/><circle cx="24" cy="11" r="3.200" fill="#2a1412"/><circle cx="17" cy="10.500" r="1.700" fill="#f02020"/><circle cx="24" cy="11" r="1.900" fill="#f02020"/><path d="M14 18h22l-2 8-2.500-5-2.500 5-2.500-5-2.500 5-2.500-5-2.500 5-2.500-5z" fill="#c8b8a0"/><path d="M36 8l6 6-3 8-4-6z" fill="#8a3020"/><rect x="0" y="27.500" width="52" height="25" fill="#120606"/><text x="26" y="38.500" font-family="Liberation Sans" font-weight="700" font-size="11" fill="#c81818" text-anchor="middle" textLength="45" lengthAdjust="spacingAndGlyphs">BACKYARD</text><text x="26" y="49.800" font-family="Liberation Sans" font-weight="700" font-size="11" fill="#c81818" text-anchor="middle" textLength="48" lengthAdjust="spacingAndGlyphs">MONSTERS</text></g></svg><circle cx="1431.6" cy="114.7" r="15.600" fill="#fff"/><svg x="1417.6" y="100.7" width="28" height="28" viewBox="0 0 28 28"><defs><clipPath id="bc"><circle cx="14" cy="14" r="13.500"/></clipPath></defs><g clip-path="url(#bc)"><rect width="28" height="28" fill="url(#aq)"/><path d="M1 20Q1 5 14 4t14 8" stroke="#f6f8f6" stroke-width="5" fill="none"/><path d="M1 20Q1 5 14 4t14 8" stroke="#58c048" stroke-width="5" fill="none" stroke-dasharray="4 5"/><circle cx="18.500" cy="13.500" r="4.800" fill="#f0a030"/><ellipse cx="18.500" cy="20" rx="4.500" ry="3" fill="#f2d2b4"/><ellipse cx="17" cy="25" rx="2" ry="1.500" fill="#f0b070"/><ellipse cx="21" cy="25" rx="2" ry="1.500" fill="#f0b070"/></g></svg><circle cx="1553.0" cy="114.7" r="15.600" fill="#fff"/><svg x="1539.0" y="100.7" width="28" height="28" viewBox="0 0 28 28"><circle cx="14" cy="14" r="13.500" fill="url(#wq)"/><rect x="5.0" y="5.0" width="5" height="5" rx=".6" fill="#1c1240"/><rect x="6.5" y="6.3" width="2" height="2.400" fill="#cfc8e8" opacity=".8"/><rect x="11.2" y="5.0" width="5" height="5" rx=".6" fill="#1c1240"/><rect x="12.7" y="6.3" width="2" height="2.400" fill="#cfc8e8" opacity=".8"/><rect x="17.4" y="5.0" width="5" height="5" rx=".6" fill="#1c1240"/><rect x="18.9" y="6.3" width="2" height="2.400" fill="#cfc8e8" opacity=".8"/><rect x="5.0" y="11.2" width="5" height="5" rx=".6" fill="#1c1240"/><rect x="6.5" y="12.5" width="2" height="2.400" fill="#cfc8e8" opacity=".8"/><rect x="11.2" y="11.2" width="5" height="5" rx=".6" fill="#1c1240"/><rect x="12.7" y="12.5" width="2" height="2.400" fill="#cfc8e8" opacity=".8"/><rect x="17.4" y="11.2" width="5" height="5" rx=".6" fill="#1c1240"/><rect x="18.9" y="12.5" width="2" height="2.400" fill="#cfc8e8" opacity=".8"/><rect x="5.0" y="17.4" width="5" height="5" rx=".6" fill="#1c1240"/><rect x="6.5" y="18.7" width="2" height="2.400" fill="#cfc8e8" opacity=".8"/><rect x="11.2" y="17.4" width="5" height="5" rx=".6" fill="#1c1240"/><rect x="12.7" y="18.7" width="2" height="2.400" fill="#cfc8e8" opacity=".8"/><rect x="17.4" y="17.4" width="5" height="5" rx=".6" fill="#1c1240"/><rect x="18.9" y="18.7" width="2" height="2.400" fill="#cfc8e8" opacity=".8"/></svg><circle cx="1431.6" cy="204.3" r="15.600" fill="#fff"/><svg x="1417.6" y="190.3" width="28" height="28" viewBox="0 0 28 28"><circle cx="14" cy="14" r="12.200" fill="#fff" stroke="#111" stroke-width="2.400"/><circle cx="9.300" cy="10" r="2.300" fill="#111"/><circle cx="18.700" cy="10" r="2.300" fill="#111"/><ellipse cx="14" cy="18.500" rx="3.300" ry="4.200" fill="#111"/></svg></svg>
<span class="t" style="left:1377.7px;top:239.2px;font-size:11.4px;font-weight:700;color:#30333a;transform:scaleX(0.9959);">YOUR PAGES</span>
<span class="t" style="left:1527.3px;top:239.2px;font-size:11.4px;font-weight:700;color:#30333a;transform:scaleX(0.9730);">SEE ALL</span>
<span class="t" style="left:1419.3px;top:277.5px;font-size:12.5px;font-weight:400;color:#484c53;transform:scaleX(0.9884);">Jonisca</span>
<div class="abs" style="left:1561.5px;top:280.5px;width:11.2px;height:15.0px;background:#f5f6f7;border:1px solid #ccd0d5;border-radius:2px"></div>
<span class="t" style="left:1563.9px;top:278.0px;font-size:11.5px;font-weight:400;color:#4b4f56;transform:scaleX(0.9990);">1</span>
<span class="t" style="left:1419.3px;top:319.2px;font-size:12.5px;font-weight:400;color:#484c53;transform:scaleX(0.9904);">Baby Journey</span>
<div class="abs" style="left:1561.5px;top:322.2px;width:11.2px;height:15.0px;background:#f5f6f7;border:1px solid #ccd0d5;border-radius:2px"></div>
<span class="t" style="left:1563.9px;top:319.7px;font-size:11.5px;font-weight:400;color:#4b4f56;transform:scaleX(0.9990);">9</span>
<div class="abs" style="left:1561.5px;top:364.0px;width:11.2px;height:15.0px;background:#f5f6f7;border:1px solid #ccd0d5;border-radius:2px"></div>
<span class="t" style="left:1563.9px;top:361.5px;font-size:11.5px;font-weight:400;color:#4b4f56;transform:scaleX(0.9990);">9</span>
<span class="t" style="left:1419.3px;top:361.0px;font-size:12.5px;font-weight:400;color:#484c53;transform:scaleX(0.9905);">Poh Ern Si - </span>
<svg class="abs" style="left:1489.500px;top:363.5px" width="40" height="14" viewBox="0 0 40 14"><g stroke="#1d2129" stroke-width="1" fill="none"><path d="M.5 2.500h5M3 .5v4M.5 5h5M1.500 5.500l.8 1.500M4.500 5.500l-.8 1.500M.5 8h5M.5 10.500h5M3 7v6.500M7 1.500h4v4M7 1.500v12M7 6h4.500M8 8.500q2 3 4 4.500M12 7.500q-1 4-5 5.500"/><path d="M14.500 .8h10v6.800h-10zM16 3h7M19.500 1.500v1.500l-3 3.500M19.500 3l3 3.500M14 10.500l-1 2.500M16.500 9.500v2.500q0 1 1 1h4q1 0 1-1.500M19 9l1 1.500M24 10l1.500 2.500"/><path d="M28 2.500h10M33 .5v4.500M27 5h12M27 8.500h12M35.500 6v6.500q0 1-1.500 1h-1.500M29.500 10l1.500 2"/></g></svg>
<span class="t" style="left:1530.0px;top:361.0px;font-size:12.5px;font-weight:400;color:#484c53;transform:scaleX(0.8634);">, B…</span>
<div class="abs" style="left:1377.4px;top:270.7px;width:33.6px;height:33.6px;border-radius:50%;overflow:hidden;background:#f4f4f4"><div class="abs" style="left:1.500px;top:6.500px;width:31px;height:21px;background:#fcfcfa;border-top:1px dashed #999;border-bottom:1px dashed #999"></div><span class="t" style="left:4px;top:5.500px;font-size:10.500px;font-weight:700;color:#16a79a;line-height:16px;transform:scaleX(.82);letter-spacing:-.2px">j<span style="color:#8a3a2a">o</span>nisca</span><div class="abs" style="left:9px;top:20px;width:19px;height:1px;background:#9a9a9a"></div><div class="abs" style="left:12px;top:22.500px;width:15px;height:1px;background:#aaa"></div></div>
<svg class="abs" style="left:1377.2px;top:312.2px" width="34" height="34" viewBox="0 0 34 34"><circle cx="17" cy="17" r="16.800" fill="#f6f6f7"/><ellipse cx="4.500" cy="20" rx="2.300" ry="3" fill="#ecd3ca" stroke="#555" stroke-width=".8"/><ellipse cx="29.500" cy="20" rx="2.300" ry="3" fill="#ecd3ca" stroke="#555" stroke-width=".8"/><ellipse cx="17" cy="20" rx="12" ry="10.500" fill="#ecd3ca" stroke="#555" stroke-width="1"/><circle cx="17" cy="5.500" r="2.300" fill="none" stroke="#555" stroke-width="1"/><path d="M17 7.800v2" stroke="#555" stroke-width="1"/><circle cx="12.500" cy="19" r="1" fill="#333"/><circle cx="21.500" cy="19" r="1" fill="#333"/><path d="M12 23.500q5 4 10 0" stroke="#333" stroke-width="1" fill="none"/><circle cx="9.500" cy="23" r="1.800" fill="#f4a0b8"/><circle cx="24.500" cy="23" r="1.800" fill="#f4a0b8"/></svg>
<div class="abs" style="left:1377.4px;top:354.2px;width:33.6px;height:33.6px;border-radius:50%;overflow:hidden;background:#141a30"><div class="abs" style="left:0;top:0;width:34px;height:5.500px;background:#8a93a8"></div><div class="abs" style="left:0;top:29.500px;width:34px;height:5px;background:#8a5a3a"></div><svg class="abs" style="left:.5px;top:7.500px" width="33" height="12" viewBox="0 0 40 14"><g stroke="#dcbc54" stroke-width="1.800" fill="none"><path d="M.5 2.500h5M3 .5v4M.5 5h5M1.500 5.500l.8 1.500M4.500 5.500l-.8 1.500M.5 8h5M.5 10.500h5M3 7v6.500M7 1.500h4v4M7 1.500v12M7 6h4.500M8 8.500q2 3 4 4.500M12 7.500q-1 4-5 5.500"/><path d="M14.500 .8h10v6.800h-10zM16 3h7M19.500 1.500v1.500l-3 3.500M19.500 3l3 3.500M14 10.500l-1 2.500M16.500 9.500v2.500q0 1 1 1h4q1 0 1-1.500M19 9l1 1.500M24 10l1.500 2.500"/><path d="M28 2.500h10M33 .5v4.500M27 5h12M27 8.500h12M35.500 6v6.500q0 1-1.500 1h-1.500M29.500 10l1.500 2"/></g></svg><svg class="abs" style="left:4px;top:21px" width="26" height="5.500" viewBox="0 0 54 14" preserveAspectRatio="none"><g stroke="#cbb878" stroke-width="2.600" fill="none"><path d="M.5 2.500h5M3 .5v4M.5 5h5M1.500 5.500l.8 1.500M4.500 5.500l-.8 1.500M.5 8h5M.5 10.500h5M3 7v6.500M7 1.500h4v4M7 1.500v12M7 6h4.500M8 8.500q2 3 4 4.500M12 7.500q-1 4-5 5.500"/><path d="M14.500 .8h10v6.800h-10zM16 3h7M19.500 1.500v1.500l-3 3.500M19.500 3l3 3.500M14 10.500l-1 2.500M16.500 9.500v2.500q0 1 1 1h4q1 0 1-1.500M19 9l1 1.500M24 10l1.500 2.500"/><path d="M28 2.500h10M33 .5v4.500M27 5h12M27 8.500h12M35.500 6v6.500q0 1-1.500 1h-1.500M29.500 10l1.500 2"/><path d="M42 2h10M47 0v13M42 7h10M43 12l8-9"/></g></svg></div>
<span class="t" style="left:1377.7px;top:397.5px;font-size:11.4px;font-weight:700;color:#30333a;transform:scaleX(0.9930);">CONTACTS</span>
<span class="t" style="left:1419.3px;top:436.3px;font-size:12.5px;font-weight:400;color:#484c53;transform:scaleX(0.9884);">Iverson Hong</span>
<div class="abs" style="left:1562.8px;top:443.8px;width:6.4px;height:6.4px;border-radius:50%;overflow:hidden;background:#42b72a"></div>
<span class="t" style="left:1419.3px;top:477.8px;font-size:12.5px;font-weight:400;color:#484c53;transform:scaleX(0.9858);">Niel Tan</span>
<div class="abs" style="left:1562.8px;top:485.3px;width:6.4px;height:6.4px;border-radius:50%;overflow:hidden;background:#42b72a"></div>
<span class="t" style="left:1419.3px;top:519.3px;font-size:12.5px;font-weight:400;color:#484c53;transform:scaleX(0.9903);">Andy Chooi</span>
<div class="abs" style="left:1562.8px;top:526.8px;width:6.4px;height:6.4px;border-radius:50%;overflow:hidden;background:#42b72a"></div>
<span class="t" style="left:1419.3px;top:561.2px;font-size:12.5px;font-weight:400;color:#484c53;transform:scaleX(0.9912);">Ch'ng Yipink</span>
<div class="abs" style="left:1562.8px;top:568.7px;width:6.4px;height:6.4px;border-radius:50%;overflow:hidden;background:#42b72a"></div>
<span class="t" style="left:1419.3px;top:602.7px;font-size:12.5px;font-weight:400;color:#484c53;transform:scaleX(0.9893);">Bani Alagesu</span>
<div class="abs" style="left:1562.8px;top:610.2px;width:6.4px;height:6.4px;border-radius:50%;overflow:hidden;background:#42b72a"></div>
<div class="abs" style="left:1377.4px;top:429.5px;width:33.6px;height:33.6px;border-radius:50%;overflow:hidden;background:linear-gradient(180deg,#5a5048 0,#6e6258 45%,#8a7a70 70%,#e8504a 76%,#e04040 100%)"><div class="abs" style="left:3px;top:14px;width:27px;height:13px;border-radius:9px 9px 0 0;background:#ece8e4"></div><div class="abs" style="left:11px;top:3px;width:11px;height:9px;border-radius:50% 50% 30% 30%;background:#2a201e"></div><div class="abs" style="left:12px;top:6px;width:9px;height:10px;border-radius:45%;background:#d4a48c"></div><div class="abs" style="left:9px;top:27px;width:16px;height:2px;background:#f4b0a8"></div></div>
<div class="abs" style="left:1377.4px;top:471.0px;width:33.6px;height:33.6px;border-radius:50%;overflow:hidden;background:#f6f2f2"><div class="abs" style="left:-6px;top:-6px;width:14px;height:16px;border-radius:50%;background:#d82428"></div><div class="abs" style="left:24px;top:-5px;width:16px;height:13px;border-radius:50%;background:#d82428"></div><div class="abs" style="left:-5px;top:22px;width:15px;height:16px;border-radius:50%;background:#d82428"></div><div class="abs" style="left:25px;top:22px;width:14px;height:16px;border-radius:50%;background:#e03a3a"></div><div class="abs" style="left:8px;top:9px;width:12px;height:2px;background:#555"></div><div class="abs" style="left:6px;top:13px;width:16px;height:3px;background:#e85a6a"></div><div class="abs" style="left:6px;top:17px;width:18px;height:4px;background:#d83a4a"></div><div class="abs" style="left:6px;top:17px;width:4px;height:4px;background:#3a9a8a"></div><div class="abs" style="left:9px;top:23px;width:14px;height:2px;background:#c86a70"></div><div class="abs" style="left:23px;top:7px;width:6px;height:9px;border-radius:40%;background:#5a4a48"></div></div>
<div class="abs" style="left:1377.4px;top:512.5px;width:33.6px;height:33.6px;border-radius:50%;overflow:hidden;background:linear-gradient(180deg,#2a2420 0,#3a302a 100%)"><div class="abs" style="left:4px;top:3px;width:8px;height:14px;background:#d8d0c0"></div><div class="abs" style="left:22px;top:3px;width:8px;height:14px;background:#c8c0b0"></div><div class="abs" style="left:13px;top:4px;width:8px;height:8px;border-radius:50%;background:#c8a088"></div><div class="abs" style="left:11px;top:12px;width:12px;height:16px;background:#e8e4e0"></div><div class="abs" style="left:0;top:26px;width:34px;height:8px;background:#1a1614"></div></div>
<svg class="abs" style="left:1377.2px;top:554.2px" width="34" height="34" viewBox="0 0 34 34"><defs><clipPath id="phc"><circle cx="17" cy="17" r="16.800"/></clipPath></defs><circle cx="17" cy="17" r="16.800" fill="#d6dae6"/><g clip-path="url(#phc)" fill="#f6f7fa"><ellipse cx="17" cy="13.500" rx="7" ry="8.500"/><path d="M11 18h12v6h-12z"/><path d="M3 36c0-9 5-12 9-13.500h10c4 1.500 9 4.500 9 13.500z"/></g></svg>
<div class="abs" style="left:1377.4px;top:595.9px;width:33.6px;height:33.6px;border-radius:50%;overflow:hidden;background:radial-gradient(circle at 50% 40%,#5a4030 0,#2a1c18 60%,#1a1210 100%)"><div class="abs" style="left:12px;top:7px;width:10px;height:11px;border-radius:50%;background:#a87050"></div><div class="abs" style="left:8px;top:18px;width:18px;height:14px;background:#e8e0d8;border-radius:6px 6px 0 0"></div><div class="abs" style="left:14px;top:22px;width:6px;height:5px;background:#d82a2a"></div><div class="abs" style="left:3px;top:12px;width:6px;height:8px;background:#c8a040;border-radius:50%"></div></div>
<span class="t" style="left:1377.7px;top:639.7px;font-size:11.4px;font-weight:700;color:#30333a;transform:scaleX(1.0010);">GROUP CONVERSATIONS</span>
<div class="abs" style="left:1377.3px;top:670.5px;width:35.0px;height:35.0px;border-radius:50%;overflow:hidden;background:#f5f6f7"><svg class="abs" style="left:7px;top:8px" width="22" height="20" viewBox="0 0 22 20"><circle cx="8" cy="5" r="4" fill="#8991a0"/><path d="M0 17c0-5 3-7 8-7s8 2 8 7z" fill="#8991a0"/><circle cx="16" cy="6.500" r="3" fill="#8991a0"/><path d="M17 17h5c0-4-2-6-6-6h-1.500c2 1.500 2.500 3.500 2.500 6z" fill="#8991a0"/><path d="M9 16.500h5M11.500 14v5" stroke="#f5f6f7" stroke-width="1.400"/></svg></div>
<span class="t" style="left:1421.7px;top:678.0px;font-size:12.5px;font-weight:400;color:#484c53;transform:scaleX(0.9922);">Create new group</span>
<div class="abs" style="left:1370.0px;top:719.7px;width:211.0px;height:32.3px;background:#f6f7f9;border-radius:5px"></div>
<svg class="abs" style="left:1377px;top:729.0px" width="13" height="13" viewBox="0 0 13 13"><circle cx="5.200" cy="5.200" r="4.200" stroke="#8d949e" stroke-width="1.300" fill="none"/><path d="M8.300 8.300 12.500 12.500" stroke="#8d949e" stroke-width="1.500"/></svg>
<span class="t" style="left:1399.0px;top:724.5px;font-size:15.2px;font-weight:400;color:#90949c;transform:scaleX(0.9413);">Search</span>
<svg class="abs" style="left:1481px;top:726.0px" width="17" height="17" viewBox="0 0 17 17"><path d="M9 2H3.500A2.500 2.500 0 0 0 1 4.500v9A2.500 2.500 0 0 0 3.500 16h9a2.500 2.500 0 0 0 2.500-2.500V8" stroke="#a3abb8" stroke-width="1.600" fill="none"/><path d="M6 11.500l.7-3L14 1.200l2.200 2.200L9 10.700z" fill="#a3abb8"/></svg>
<svg class="abs" style="left:1506px;top:726.0px" width="18" height="17" viewBox="0 0 18 17"><circle cx="6.500" cy="4" r="3.300" fill="#a3abb8"/><path d="M0 14c0-4 2.500-6 6.500-6s6.500 2 6.500 6z" fill="#a3abb8"/><circle cx="13.500" cy="5" r="2.600" fill="#a3abb8"/><path d="M14 14h4c0-3.500-1.500-5.500-4.500-5.500h-1c1.200 1.200 1.500 3 1.500 5.500z" fill="#a3abb8"/><path d="M6.500 14v3M5 15.500h3" stroke="#a3abb8" stroke-width="1.200"/></svg>
<svg class="abs" style="left:1532px;top:728.0px" width="17" height="13" viewBox="0 0 17 13"><rect x="0" y="0" width="12" height="13" rx="2" fill="#a3abb8"/><path d="M12.500 5l4.500-3v9l-4.500-3z" fill="#a3abb8"/><path d="M6 3.500v6M3 6.500h6" stroke="#f6f7f9" stroke-width="1.500"/></svg>
<svg class="abs" style="left:1557px;top:725.5px" width="17" height="17" viewBox="0 0 17 17"><path d="M14.46 6.79 L16.83 6.81 L16.83 10.19 L14.46 10.21 L13.92 11.50 L15.58 13.20 L13.20 15.58 L11.50 13.92 L10.21 14.46 L10.19 16.83 L6.81 16.83 L6.79 14.46 L5.50 13.92 L3.80 15.58 L1.42 13.20 L3.08 11.50 L2.54 10.21 L0.17 10.19 L0.17 6.81 L2.54 6.79 L3.08 5.50 L1.42 3.80 L3.80 1.42 L5.50 3.08 L6.79 2.54 L6.81 0.17 L10.19 0.17 L10.21 2.54 L11.50 3.08 L13.20 1.42 L15.58 3.80 L13.92 5.50Z" fill="#a3abb8"/><circle cx="8.500" cy="8.500" r="6.400" fill="#a3abb8"/><circle cx="8.500" cy="8.500" r="2.600" fill="#f6f7f9"/></svg>
<div id="overlay"></div>
<div class="abs" style="left:530.8px;top:41.3px;width:521.4px;height:653.5px;background:#fff;border-radius:3px;box-shadow:0 2px 26px rgba(0,0,0,.3),0 0 0 1px rgba(0,0,0,.1)"></div>
<div class="abs" style="left:530.8px;top:41.3px;width:521.4px;height:40.3px;background:#f5f6f7;border-radius:3px 3px 0 0;border-bottom:1px solid #e5e5e5"></div>
<span class="t" style="left:544.5px;top:50.6px;font-size:14.3px;font-weight:700;color:#1d2129;transform:scaleX(0.9949);">Templates</span>
<svg class="abs" style="left:1028px;top:57.5px" width="10" height="10" viewBox="0 0 10 10"><path d="M1 1l8 8M9 1l-8 8" stroke="#bec3c9" stroke-width="2"/></svg>
<svg class="abs" style="left:530.8px;top:81.6px" width="521.4" height="105.0" viewBox="0 0 521.4 105.0"><rect x="0" y="0" width="521.4" height="105.0" fill="#a6e0f5"/><rect x="0" y="0" width="75.6" height="11" fill="#e6f5fc"/><rect x="0" y="93.8" width="521.4" height="11.2" fill="#5d9b2f"/><rect x="75.6" y="0" width="116.1" height="87.4" fill="#a7bcc5"/><rect x="94.5" y="0" width="4" height="87.4" fill="#d5e0e5"/><rect x="122.2" y="0" width="4" height="87.4" fill="#d5e0e5"/><rect x="148.5" y="0" width="4" height="87.4" fill="#d5e0e5"/><rect x="174.8" y="0" width="4" height="87.4" fill="#d5e0e5"/><rect x="75.6" y="28.4" width="116.1" height="4" fill="#d5e0e5"/><rect x="75.6" y="57.1" width="116.1" height="4" fill="#d5e0e5"/><rect x="100.6" y="34.8" width="21.2" height="22.9" fill="#a2cd70"/><rect x="154.6" y="34.8" width="19.600" height="22.900" fill="#87a0ae"/><rect x="154.6" y="62.8" width="19.600" height="21.900" fill="#87a0ae"/><rect x="75.6" y="87.1" width="116.1" height="17.9" fill="#eef0f2"/><rect x="190.7" y="0" width="1.500" height="105.0" fill="#c5d2d8"/><circle cx="133.6" cy="107.4" r="11" fill="#9b9b9b"/><ellipse cx="156.2" cy="-1.1" rx="20.500" ry="14" fill="#fff"/><path d="M141.2 7.4L141.7 17.4L152.2 11.4Z" fill="#fff"/><rect x="151.5" y="0" width="1.500" height="1.600" fill="#f0506e"/><rect x="158.8" y="0" width="1.500" height="1.600" fill="#f0506e"/><path d="M133.6 39.0c-5-5-8.300-8-8.300-12a8.300 8.300 0 0 1 16.600 0c0 4-3.300 7-8.300 12z" fill="#f0506e"/><circle cx="133.6" cy="27.0" r="3.200" fill="#c9d6dc"/><rect x="252.2" y="68.4" width="5.500" height="26" fill="#4a3328"/><circle cx="254.8" cy="51.6" r="17.700" fill="#86bc48"/><circle cx="269.7" cy="86.4" r="15" fill="#5c9a40"/><circle cx="247.4" cy="92.4" r="12" fill="#86bc48"/><rect x="404.2" y="0" width="45.7" height="93.8" fill="#cf5e2a"/><rect x="409.4" y="0.4" width="8.4" height="3.0" fill="#e07a3c"/><rect x="432.0" y="0.4" width="8.8" height="3.0" fill="#e07a3c"/><rect x="421.9" y="11.8" width="8.8" height="3.6" fill="#e07a3c"/><rect x="284.5" y="36.4" width="119.7" height="57.4" fill="#e17b2d"/><path d="M272.7 0H404.2V39.8H276.7a4 4 0 0 1-4-4z" fill="#f4c232"/><path d="M388.2 0H404.2V39.8H394.2V12q0-9-5-12z" fill="#e4a63c"/><rect x="278.8" y="15.4" width="37" height="1.300" fill="#e8a92e"/><rect x="342.9" y="15.4" width="37.800" height="1.300" fill="#e8a92e"/><rect x="278.8" y="27.4" width="37" height="1.300" fill="#e8a92e"/><rect x="342.9" y="27.4" width="37.800" height="1.300" fill="#e8a92e"/><path d="M320.1 19.8a10 7.500 0 0 1 20 0z" fill="#e17b2d"/><rect x="320.1" y="20.8" width="20" height="2.600" fill="#e17b2d"/><rect x="320.1" y="24.3" width="20" height="2.200" fill="#c9622a"/><rect x="321.1" y="27.3" width="18" height="3.400" rx="1.500" fill="#e17b2d"/><rect x="291.2" y="45.9" width="38.9" height="35.1" fill="#c9edf9" stroke="#fff" stroke-width="2.400"/><rect x="360.4" y="45.9" width="38.2" height="35.1" fill="#c9edf9" stroke="#fff" stroke-width="2.400"/><rect x="336.2" y="45.9" width="18.5" height="50.0" fill="#c9edf9" stroke="#fff" stroke-width="2.400"/><rect x="336.2" y="53.9" width="18.500" height="2.400" fill="#fff"/><rect x="335.2" y="74.6" width="13" height="1.600" fill="#a0522d"/><rect x="457.2" y="68.4" width="5.500" height="26" fill="#4a3328"/><circle cx="459.3" cy="26.4" r="15" fill="#86bc48"/><circle cx="459.3" cy="51.6" r="19" fill="#86bc48"/><circle cx="427.9" cy="91.4" r="17" fill="#86bc48"/><circle cx="454.9" cy="92.4" r="12" fill="#86bc48"/><circle cx="490.4" cy="91.4" r="17" fill="#86bc48"/><rect x="0" y="93.8" width="521.4" height="11.2" fill="#5d9b2f"/><rect x="75.6" y="93.4" width="116.1" height="11.6" fill="#eef0f2"/><circle cx="133.6" cy="107.4" r="11" fill="#9b9b9b"/></svg>
<span class="t" style="left:556.0px;top:203.1px;font-size:16.6px;font-weight:700;color:#1c1e21;transform:scaleX(1.0013);">Restaurants and cafes</span>
<span class="t" style="left:556.0px;top:224.0px;font-size:14.6px;font-weight:400;color:#4b4f56;transform:scaleX(0.9975);">Designed to highlight photos and important information about your menu,</span>
<span class="t" style="left:556.0px;top:245.4px;font-size:14.6px;font-weight:400;color:#4b4f56;transform:scaleX(0.9941);">hours and location.</span>
<span class="t" style="left:556.0px;top:287.0px;font-size:14.6px;font-weight:700;color:#1d2129;transform:scaleX(0.9935);">Buttons on Page</span>
<span class="t" style="left:556.0px;top:307.2px;font-size:14.6px;font-weight:400;color:#90949c;transform:scaleX(0.9981);">Buttons encourage people to take actions that you've selected</span>
<div class="abs" style="left:556.1px;top:343.3px;width:469.5px;height:170.1px;background:#f5f6f7;border:1px solid #dddfe2"></div>
<div class="abs" style="left:600.3px;top:344.3px;width:372.6px;height:168.1px;background:#fff;border-left:1px solid #dddfe2;border-right:1px solid #dddfe2"></div>
<div class="abs" style="left:605.4px;top:350.7px;width:41.5px;height:41.2px;background:#ebedf0"></div>
<div class="abs" style="left:605.4px;top:410.3px;width:34.7px;height:4.0px;background:#e4e6e9"></div>
<div class="abs" style="left:605.4px;top:421.8px;width:27.6px;height:4.0px;background:#e4e6e9"></div>
<div class="abs" style="left:605.4px;top:433.3px;width:34.7px;height:4.0px;background:#e4e6e9"></div>
<div class="abs" style="left:605.4px;top:444.8px;width:27.6px;height:4.0px;background:#e4e6e9"></div>
<div class="abs" style="left:654.3px;top:350.7px;width:307.8px;height:118.1px;background:#ebedf0"></div>
<div class="abs" style="left:654.3px;top:468.8px;width:307.8px;height:32.7px;background:#fff;border:1px solid #dddfe2"></div>
<div class="abs" style="left:661.7px;top:477.2px;width:103.7px;height:16.2px;background:#fff;border:1px solid #4080ff;border-radius:1px"></div>
<div class="abs" style="left:713.5px;top:477.2px;width:51.9px;height:16.2px;background:#7aa7ff;border:1px solid #4080ff"></div>
<div class="abs" style="left:687.1px;top:477.2px;width:1.0px;height:16.2px;background:#4080ff"></div>
<div class="abs" style="left:739.0px;top:477.2px;width:1.0px;height:16.2px;background:#4080ff"></div>
<div class="abs" style="left:850.7px;top:477.2px;width:104.0px;height:16.2px;background:#4080ff;border-radius:1px"></div>
<span class="t" style="left:556.0px;top:536.4px;font-size:14.6px;font-weight:400;color:#4b4f56;transform:scaleX(0.9905);">Primary Button</span>
<span class="t" style="left:556.0px;top:556.3px;font-size:14.6px;font-weight:400;color:#90949c;transform:scaleX(0.9938);">Get Directions</span>
<span class="t" style="left:556.0px;top:588.0px;font-size:14.6px;font-weight:400;color:#4b4f56;transform:scaleX(0.9956);">Buttons on Toolbar</span>
<span class="t" style="left:556.0px;top:608.0px;font-size:14.6px;font-weight:400;color:#90949c;transform:scaleX(0.9958);">Unlike, Following, Share, Save</span>
<div class="abs" style="left:530.8px;top:638.5px;width:521.4px;height:56.3px;background:#fff;border-radius:0 0 3px 3px"></div>
<div class="abs" style="left:542.7px;top:639.4px;width:496.3px;height:1.0px;background:#dddfe2"></div>
<div class="abs" style="left:867.8px;top:655.1px;width:51.5px;height:27.3px;background:#f5f6f7;border:1px solid #ccd0d5;border-radius:2px"></div>
<span class="t" style="left:878.9px;top:658.8px;font-size:12.4px;font-weight:700;color:#4b4f56;transform:scaleX(0.9890);">Back</span>
<div class="abs" style="left:924.3px;top:655.1px;width:114.7px;height:27.3px;background:#4267b2;border:1px solid #4267b2;border-radius:2px"></div>
<span class="t" style="left:935.8px;top:658.8px;font-size:12.4px;font-weight:700;color:#fff;transform:scaleX(1.0028);">Apply Template</span>
<div class="abs" style="left:1038.6px;top:84.5px;width:11.2px;height:553.3px;background:rgba(0,0,0,.15);border-radius:6px"></div>
<div class="abs" style="left:1038.6px;top:127.3px;width:11.2px;height:206.0px;background:rgba(0,0,0,.42);border-radius:6px"></div>
</div>
<div id="vscroll">
<svg class="abs" style="left:5.500px;top:7px" width="8" height="5" viewBox="0 0 8 5"><path d="M0 4.500 4 .3 8 4.500z" fill="#a3a3a3"/></svg>
<svg class="abs" style="left:5.500px;top:740.200px" width="8" height="5" viewBox="0 0 8 5"><path d="M0 .3 4 4.500 8 .3z" fill="#a3a3a3"/></svg>
</div>

<!-- ================= TASKBAR ================= -->
<div id="taskbar">
<div class="abs" style="left:0;top:0;width:50px;height:42px;background:#e9ebf0"></div>
<svg class="abs" style="left:16.500px;top:12.500px" width="17" height="17" viewBox="0 0 17 17"><path d="M0 2.400 6.900 1.400v6.700H0zM7.700 1.300 17 0v8.100H7.700zM0 8.900h6.900v6.700L0 14.600zM7.700 8.900H17V17l-9.300-1.300z" fill="#111"/></svg>
<div class="abs" style="left:50px;top:0;width:358px;height:42px;background:#fff;border:1px solid #d9dadc;border-bottom:0"></div>
<svg class="abs" style="left:62px;top:13px" width="18" height="17" viewBox="0 0 18 17"><circle cx="11.300" cy="6.300" r="5.300" stroke="#222" stroke-width="1.300" fill="none"/><path d="M7.500 10.200 .8 16.500" stroke="#222" stroke-width="1.400"/></svg>
<div class="abs" style="left:92.500px;top:11px;font-size:15.3px;line-height:20px;color:#222;white-space:nowrap;letter-spacing:0.016px">Type here to search</div>
<svg class="abs" style="left:424px;top:12px" width="19" height="18" viewBox="0 0 19 18"><path d="M1 4.500V1.500h10v3M1 13.500v3h10v-3M1 6.500h10v5H1zM15 1v3M15 6.500v5M15 14v3" stroke="#222" stroke-width="1.100" fill="none"/></svg>
<svg class="abs" style="left:474px;top:8px" width="26" height="26" viewBox="0 0 26 26"><defs><linearGradient id="eg1" x1="0" y1="1" x2="1" y2="0"><stop offset="0" stop-color="#0b4a9c"/><stop offset=".45" stop-color="#1c9be0"/><stop offset=".75" stop-color="#35c1c0"/><stop offset="1" stop-color="#6fd64c"/></linearGradient></defs><circle cx="13" cy="13" r="12.500" fill="url(#eg1)"/><path d="M26 12.500H15.500c-1.500 0-2 1.200-1.500 2.500 1 2.600 4 3.600 7 3 2-.4 3.500-1.300 5-3z" fill="#e2f0d2"/><path d="M6.500 17c0-4.800 3.800-8 8-8 3.500 0 5.500 2 5.500 3.500h-5.500c-2.500 0-3.500 2-3 4.500.8 4 5 6.500 10 5-5 4.500-15 2-15-5z" fill="#0d57ac"/></svg>
<svg class="abs" style="left:526px;top:9px" width="25" height="24" viewBox="0 0 25 24"><path d="M1 3.500h8l2 2.500h13v4H1z" fill="#e8a200"/><path d="M1 7.500h23v14.500H1z" fill="#ffd15c"/><path d="M1 7.500h23v3H1z" fill="#ffe08a"/><path d="M6.500 13.500h12v10h-3.500v-5.500h-5v5.500H6.500z" fill="#1f8fe0"/></svg>
<svg class="abs" style="left:577px;top:8px" width="26" height="26" viewBox="0 0 26 26"><path d="M1 10 13 1.500 25 10v14H1z" fill="#0b60ad"/><path d="M3.500 7.500h19v13h-19z" fill="#e9f3fb"/><path d="M1 10l12 8.500L25 10v14H1z" fill="#2c9dea"/><path d="M1 24 13 15l12 9z" fill="#1a82d4"/></svg>
<svg class="abs" style="left:628px;top:8px" width="26" height="26" viewBox="0 0 26 26"><circle cx="8" cy="8" r="6.500" fill="#0a9be8"/><circle cx="18" cy="18" r="6.500" fill="#0a9be8"/><circle cx="13" cy="13" r="10.500" fill="#0fa9f2"/><text x="13" y="19" font-family="Liberation Sans" font-weight="700" font-size="16.500" fill="#fff" text-anchor="middle">S</text></svg>
<svg class="abs" style="left:681px;top:7px" width="26" height="27" viewBox="0 0 26 27"><defs><radialGradient id="ff1" cx=".7" cy=".15" r="1"><stop offset="0" stop-color="#ffe226"/><stop offset=".35" stop-color="#ff9a1e"/><stop offset=".7" stop-color="#ff3b47"/><stop offset="1" stop-color="#e31587"/></radialGradient></defs><path d="M13 4.500C15 3 16 1.500 16.500 .5c2 2 2.500 4 2.500 5.500 3.500 2 6 5.500 6 9.500 0 6-5.400 11-12 11S1 21.500 1 15.500c0-4 1.500-6.500 3-8 .2 1 .6 1.700 1 2 .5-2 2-4 4-5 .5 1 1.500 1.500 4 0z" fill="url(#ff1)"/><circle cx="13.500" cy="15" r="5.800" fill="#7b3fd0"/><path d="M8 12c2-2.500 6-3 8.500-1-1.500 0-2.500.8-2.500 2 2 .5 3 2.200 2.500 4-1 2.500-4.500 3.300-7 1.500 3 3.500 9 2.500 10.500-2 .8 3.500-2.500 7.500-7 7.500S5 19.800 5 16c0-1.500.8-3 3-4z" fill="#ffb42a"/></svg>
<svg class="abs" style="left:732px;top:9px" width="26" height="24" viewBox="0 0 26 24"><path d="M6.700 0 0 4.300l6.700 4.300L13 4.300zM19.300 0 13 4.300l6.300 4.300L26 4.300zM0 12.900l6.700 4.300L13 12.900 6.700 8.600zM19.300 8.600 13 12.900l6.300 4.300 6.700-4.300zM6.700 18.600 13 22.900l6.300-4.300L13 14.300z" fill="#0d0d0d"/></svg>
<div class="abs" style="left:784.400px;top:9px;width:24.500px;height:24.500px;background:#fff"></div>
<div class="abs" style="left:784.400px;top:10.500px;width:24.500px;font-size:6.600px;font-weight:700;color:#222;text-align:center;line-height:8px;letter-spacing:-.3px">amazon</div>
<svg class="abs" style="left:784.400px;top:17.500px" width="24.500" height="16" viewBox="0 0 26 17"><path d="M5 1.500c5 2 11 2 16 0" stroke="#f90" stroke-width="1.200" fill="none"/><path d="M2 4.500h3.500l2 9h15" stroke="#146eb4" stroke-width="1.300" fill="none"/><path d="M6.500 6h17.500v7H8z" fill="#8cc1ea" stroke="#146eb4" stroke-width=".8"/><path d="M9 6v7M12 6v7M15 6v7M18 6v7M21 6v7M7 8.300h17M7.500 10.600h16.500" stroke="#146eb4" stroke-width=".6"/></svg>
<svg class="abs" style="left:836.600px;top:9px" width="23" height="23" viewBox="0 0 23 23"><defs><clipPath id="ndc"><circle cx="11.500" cy="11.500" r="8.300"/></clipPath><linearGradient id="ndg" x1="0" y1="0" x2="0" y2="1"><stop offset="0" stop-color="#3a78c8"/><stop offset="1" stop-color="#173f86"/></linearGradient></defs><circle cx="11.500" cy="11.500" r="11.300" fill="url(#ndg)"/><circle cx="11.500" cy="11.500" r="8.300" fill="#f4f7fb"/><g clip-path="url(#ndc)"><path d="M2 21 7.500 12l2 3 2-6.500 2.500 5.500 1.500-2.500L21 21z" fill="#1f509a"/></g></svg>
<div class="abs" style="left:875.300px;top:0;width:47.200px;height:42px;background:rgba(255,255,255,.45)"></div><div class="abs" style="left:923px;top:0;width:1px;height:42px;background:rgba(255,255,255,.5)"></div>
<svg class="abs" style="left:888.200px;top:9.100px" width="23" height="23" viewBox="0 0 26 26"><circle cx="13" cy="13" r="12.500" fill="#fff"/><path d="M13 .5a12.500 12.500 0 0 1 10.830 6.250H13a6.250 6.250 0 0 0-5.410 3.120L2.170 6.750A12.500 12.500 0 0 1 13 .5z" fill="#ea4335"/><path d="M2.170 6.750 7.590 16.120A6.250 6.250 0 0 0 13 19.250l-5.410 6.100A12.500 12.500 0 0 1 2.170 6.750z" fill="#34a853"/><path d="M23.830 6.750A12.500 12.500 0 0 1 7.590 25.350L13 19.250a6.250 6.250 0 0 0 5.410-9.380z" fill="#fbbc05"/><path d="M23.830 6.750H13a6.250 6.250 0 0 1 5.410 3.120z" fill="#ea4335"/><circle cx="13" cy="13" r="5.600" fill="#fff"/><circle cx="13" cy="13" r="4.500" fill="#4285f4"/></svg>
<svg class="abs" style="left:940px;top:10px" width="23" height="23" viewBox="0 0 23 23"><defs><linearGradient id="phg" x1="0" y1="0" x2="0" y2="1"><stop offset="0" stop-color="#2a9ef4"/><stop offset="1" stop-color="#1a78d8"/></linearGradient></defs><rect width="23" height="23" fill="url(#phg)"/><path d="M8 23 16.500 12 23 19v4z" fill="#3a74d4"/><path d="M0 23v-5.500L7.500 9 18 23z" fill="#0c3c84"/><path d="M0 23v-2l10-3 8 5z" fill="#123f8c"/><circle cx="15.500" cy="5" r="2.200" fill="#d4ecff"/></svg>
<div class="abs" style="left:827.5px;top:40px;width:42.5px;height:2px;background:#0a78d6"></div>
<div class="abs" style="left:875.4px;top:40px;width:49.60000000000002px;height:2px;background:#0a78d6"></div>
<div class="abs" style="left:930.6px;top:40px;width:42.0px;height:2px;background:#0a78d6"></div>
<svg class="abs" style="left:1343px;top:17px" width="15" height="9" viewBox="0 0 15 9"><path d="M1 8 7.500 1.500 14 8" stroke="#222" stroke-width="1.300" fill="none"/></svg>
<svg class="abs" style="left:1366px;top:14px" width="18" height="13" viewBox="0 0 18 13"><rect x="2.500" y="3.500" width="14" height="8" stroke="#222" stroke-width="1" fill="none"/><rect x="4" y="5" width="9" height="5" fill="#222"/><path d="M1 5.500v4" stroke="#222" stroke-width="1.500"/><path d="M2 0v3M4.500 0v3M1 3h4.500" stroke="#222" stroke-width="1"/></svg>
<svg class="abs" style="left:1391px;top:13px" width="19" height="17" viewBox="0 0 19 17"><rect x="3.500" y="2.500" width="14" height="9.500" stroke="#333" stroke-width="1" fill="none"/><path d="M10.500 12v3.500M6.500 15.500h8" stroke="#333" stroke-width="1"/><rect x=".5" y=".5" width="4" height="4" fill="#ececef" stroke="#333" stroke-width="1"/></svg>
<svg class="abs" style="left:1417px;top:13px" width="18" height="16" viewBox="0 0 18 16"><path d="M1 5.500h3L8 1.500v13L4 10.500H1z" stroke="#333" stroke-width="1" fill="none"/><path d="M10.500 5.500a3.500 3.500 0 0 1 0 5" stroke="#333" stroke-width="1" fill="none"/><path d="M12.800 3.200a6.500 6.500 0 0 1 0 9.600" stroke="#888" stroke-width="1" fill="none"/><path d="M15 1a9.500 9.500 0 0 1 0 14" stroke="#bbb" stroke-width="1" fill="none"/></svg>
<div class="abs" style="left:1444.3px;top:13.5px;font-size:12.4px;line-height:16px;color:#222;white-space:nowrap;letter-spacing:-1.053px">ENG</div>
<div class="abs" style="left:1488px;top:4px;font-size:12.4px;line-height:16px;color:#222;white-space:nowrap;letter-spacing:-0.253px">1:28 AM</div>
<div class="abs" style="left:1478.8px;top:23px;font-size:12.4px;line-height:16px;color:#222;white-space:nowrap;letter-spacing:0.018px">23/10/2020</div>
<svg class="abs" style="left:1557.400px;top:12px" width="26" height="26" viewBox="0 0 26 26"><path d="M.5 .5h16v11.500h-9l-3 3.500v-3.500h-4z" fill="#111"/><path d="M3 3.500h11M3 6h11M3 8.500h7" stroke="#ececef" stroke-width="1"/><circle cx="16.500" cy="17.500" r="6.800" fill="#d0d0d3" stroke="#444" stroke-width="1"/><text x="16.500" y="21.500" font-family="Liberation Sans" font-size="10.500" fill="#111" text-anchor="middle">1</text></svg>
<div class="abs" style="left:1595px;top:0;width:1px;height:42px;background:#b9b9bd"></div>
</div>

</body>
</html>
